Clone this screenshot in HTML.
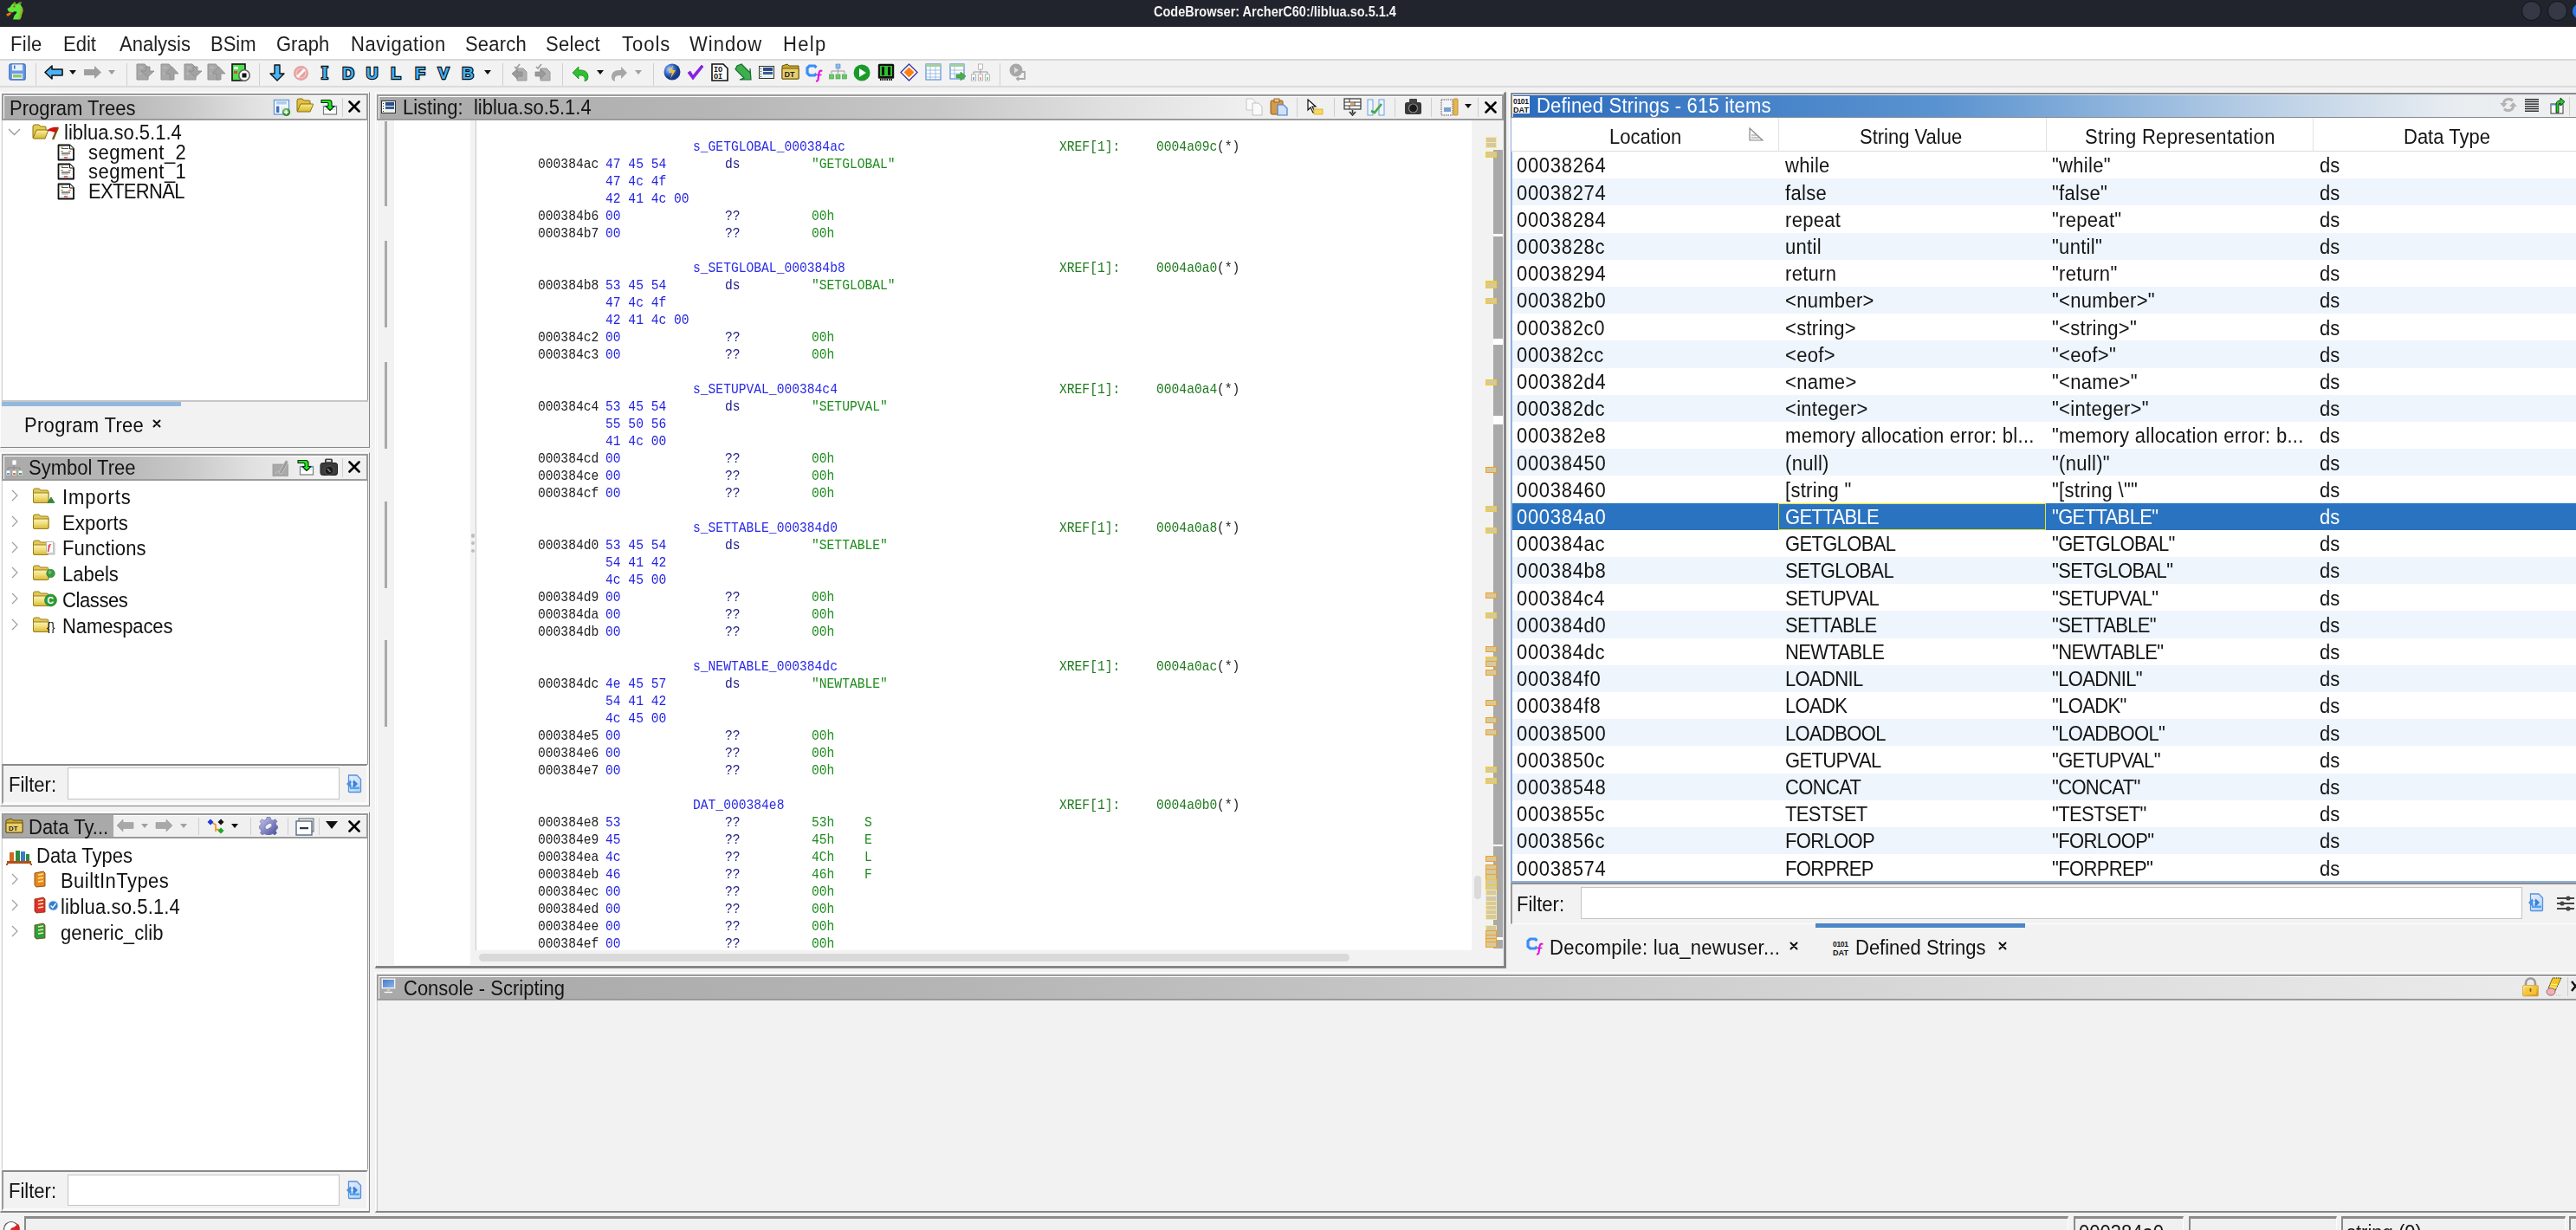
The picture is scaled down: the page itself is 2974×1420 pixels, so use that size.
<!DOCTYPE html><html><head><meta charset="utf-8"><style>
html,body{margin:0;padding:0;width:2974px;height:1420px;overflow:hidden;background:#f2f2f2;}
body{position:relative;font-family:"Liberation Sans", sans-serif;}
div{position:absolute;box-sizing:border-box;}
.t{white-space:pre;will-change:transform;}
svg{position:absolute;}
</style></head><body>
<div style="left:0px;top:0px;width:2974px;height:31px;background:#21242d;"></div>
<div class="t" style="left:1332px;top:4.68px;font-size:14.5px;line-height:18px;color:#f4f4f4;font-family:'Liberation Sans', sans-serif;transform:scaleY(1.1);transform-origin:0 14.02px;font-weight:bold;">CodeBrowser: ArcherC60:/liblua.so.5.1.4</div>
<div style="left:2910.5px;top:1px;width:23px;height:23px;border-radius:50%;background:#353945;border:1.6px solid #111318;"></div>
<div style="left:2940.5px;top:1px;width:23px;height:23px;border-radius:50%;background:#353945;border:1.6px solid #111318;"></div>
<div style="left:2970px;top:3px;width:24px;height:20px;border-radius:50%;background:#2a74e8;"></div>
<svg style="position:absolute;left:0px;top:0px;" width="30" height="26" viewBox="0 0 30 26"><path d="M14 5 L17 2 L19 5 L23 2.5 L24 6 L26 9 L26.5 13 L25 16 L24.5 20 L23 22.5 L15 22.5 L16.5 18 L19 15 L17 13 L14 14.5 L11 14 L9 12 L8.5 10 L12 8 L13 6 Z" fill="#5ee83c"/><path d="M16 2.5 L19 5 L18 6 L15 4.5 Z M22 2.5 L25 2 L24 6 L22 5 Z" fill="#8a8a10"/><path d="M24 8 L26.5 10 L26 15 L24.5 19 L23 22 L21 21 L23 15 Z" fill="#a8a818" opacity="0.75"/><path d="M18 13 L19.5 14 L17 17 L16 16 Z" fill="#1a1e20"/><path d="M7 16.5 L12 14 L13 16 L9 19 Z" fill="#f0780a"/><path d="M11 13.5 L14 14 L12 15.5 Z" fill="#c83010"/><circle cx="16.5" cy="7.5" r="1.1" fill="#c82818"/></svg>
<div style="left:0px;top:31px;width:2974px;height:37px;background:#ffffff;"></div>
<div class="t" style="left:12px;top:38.48px;font-size:22px;line-height:28px;color:#1e1e1e;font-family:'Liberation Sans', sans-serif;transform:scaleY(1.07);transform-origin:0 21.62px;letter-spacing:0.3px;">File</div>
<div class="t" style="left:73px;top:38.48px;font-size:22px;line-height:28px;color:#1e1e1e;font-family:'Liberation Sans', sans-serif;transform:scaleY(1.07);transform-origin:0 21.62px;letter-spacing:0px;">Edit</div>
<div class="t" style="left:138px;top:38.48px;font-size:22px;line-height:28px;color:#1e1e1e;font-family:'Liberation Sans', sans-serif;transform:scaleY(1.07);transform-origin:0 21.62px;letter-spacing:0px;">Analysis</div>
<div class="t" style="left:243px;top:38.48px;font-size:22px;line-height:28px;color:#1e1e1e;font-family:'Liberation Sans', sans-serif;transform:scaleY(1.07);transform-origin:0 21.62px;letter-spacing:0px;">BSim</div>
<div class="t" style="left:319px;top:38.48px;font-size:22px;line-height:28px;color:#1e1e1e;font-family:'Liberation Sans', sans-serif;transform:scaleY(1.07);transform-origin:0 21.62px;letter-spacing:0px;">Graph</div>
<div class="t" style="left:405px;top:38.48px;font-size:22px;line-height:28px;color:#1e1e1e;font-family:'Liberation Sans', sans-serif;transform:scaleY(1.07);transform-origin:0 21.62px;letter-spacing:0.6px;">Navigation</div>
<div class="t" style="left:537px;top:38.48px;font-size:22px;line-height:28px;color:#1e1e1e;font-family:'Liberation Sans', sans-serif;transform:scaleY(1.07);transform-origin:0 21.62px;letter-spacing:0.2px;">Search</div>
<div class="t" style="left:630px;top:38.48px;font-size:22px;line-height:28px;color:#1e1e1e;font-family:'Liberation Sans', sans-serif;transform:scaleY(1.07);transform-origin:0 21.62px;letter-spacing:0.3px;">Select</div>
<div class="t" style="left:718px;top:38.48px;font-size:22px;line-height:28px;color:#1e1e1e;font-family:'Liberation Sans', sans-serif;transform:scaleY(1.07);transform-origin:0 21.62px;letter-spacing:1.0px;">Tools</div>
<div class="t" style="left:796px;top:38.48px;font-size:22px;line-height:28px;color:#1e1e1e;font-family:'Liberation Sans', sans-serif;transform:scaleY(1.07);transform-origin:0 21.62px;letter-spacing:1.0px;">Window</div>
<div class="t" style="left:904px;top:38.48px;font-size:22px;line-height:28px;color:#1e1e1e;font-family:'Liberation Sans', sans-serif;transform:scaleY(1.07);transform-origin:0 21.62px;letter-spacing:1.3px;">Help</div>
<div style="left:0px;top:68px;width:2974px;height:2px;background:#d9d9d9;"></div>
<div style="left:0px;top:70px;width:2974px;height:29px;background:#f2f2f2;"></div>
<div style="left:0px;top:99px;width:2974px;height:2px;background:#dcdcdc;"></div>
<svg style="position:absolute;left:10px;top:73px;" width="20" height="20" viewBox="0 0 20 20"><rect x="0.8" y="0.8" width="18.4" height="18.4" rx="2" fill="#6b9be0" stroke="#3f6fc0" stroke-width="1.2"/><rect x="4" y="1.5" width="12" height="7" fill="#e8f0fb"/><rect x="6" y="2.5" width="1.5" height="4" fill="#3f6fc0"/><rect x="4" y="12" width="12" height="6" fill="#f4f4f4"/><rect x="5" y="13" width="10" height="3.5" fill="#8cc870"/></svg>
<div style="left:41px;top:73px;width:1px;height:26px;background:#d0d0d0;"></div>
<svg style="position:absolute;left:51px;top:75px;" width="22" height="17" viewBox="0 0 22 17"><path d="M1 8.5 L9 1 L9 5 L21 5 L21 12 L9 12 L9 16 Z" fill="#48b4f8" stroke="#111" stroke-width="1.6" stroke-linejoin="round"/></svg>
<svg style="position:absolute;left:80px;top:81px;" width="8" height="5" viewBox="0 0 8 5"><path d="M0 0 L8 0 L4 5 Z" fill="#111"/></svg>
<svg style="position:absolute;left:96px;top:75px;" width="22" height="17" viewBox="0 0 22 17"><path d="M21 8.5 L13 1 L13 5 L1 5 L1 12 L13 12 L13 16 Z" fill="#9e9e9e"/></svg>
<svg style="position:absolute;left:125px;top:81px;" width="8" height="5" viewBox="0 0 8 5"><path d="M0 0 L8 0 L4 5 Z" fill="#9a9a9a"/></svg>
<div style="left:146px;top:73px;width:1px;height:26px;background:#d0d0d0;"></div>
<svg style="position:absolute;left:156.6px;top:73px;" width="21" height="21" viewBox="0 0 21 21"><path d="M1 1 L10 1 L14 5 L14 19 L1 19 Z" fill="#a8a8a8" stroke="#929292" stroke-width="1"/><path d="M3.5 5 H8 M3.5 12 H6" stroke="#c4c4c4" stroke-width="1"/><path d="M9 8 L14 8 L14 13 L19 13 L11.5 20 L4 13 L9 13 Z" fill="#a2a2a2" stroke="#8a8a8a" stroke-width="0.8" transform="translate(2,-4)"/></svg>
<svg style="position:absolute;left:184.6px;top:73px;" width="21" height="21" viewBox="0 0 21 21"><path d="M1 1 L10 1 L14 5 L14 19 L1 19 Z" fill="#a8a8a8" stroke="#929292" stroke-width="1"/><path d="M3.5 5 H8 M3.5 12 H6" stroke="#c4c4c4" stroke-width="1"/><path d="M9 20 L14 20 L14 13 L19 13 L11.5 5 L4 13 L9 13 Z" fill="#a2a2a2" stroke="#8a8a8a" stroke-width="0.8" transform="translate(2,-1)"/></svg>
<svg style="position:absolute;left:212px;top:73px;" width="21" height="21" viewBox="0 0 21 21"><path d="M1 1 L10 1 L14 5 L14 19 L1 19 Z" fill="#a8a8a8" stroke="#929292" stroke-width="1"/><path d="M3.5 5 H8 M3.5 12 H6" stroke="#c4c4c4" stroke-width="1"/><path d="M9 8 L14 8 L14 13 L19 13 L11.5 20 L4 13 L9 13 Z" fill="#a2a2a2" stroke="#8a8a8a" stroke-width="0.8" transform="translate(2,-4)"/></svg>
<svg style="position:absolute;left:239.3px;top:73px;" width="21" height="21" viewBox="0 0 21 21"><path d="M1 1 L10 1 L14 5 L14 19 L1 19 Z" fill="#a8a8a8" stroke="#929292" stroke-width="1"/><path d="M3.5 5 H8 M3.5 12 H6" stroke="#c4c4c4" stroke-width="1"/><path d="M9 20 L14 20 L14 13 L19 13 L11.5 5 L4 13 L9 13 Z" fill="#a2a2a2" stroke="#8a8a8a" stroke-width="0.8" transform="translate(2,-1)"/></svg>
<svg style="position:absolute;left:266.5px;top:73px;" width="22" height="21" viewBox="0 0 22 21"><rect x="1" y="1" width="15" height="19" fill="#4ee04e" stroke="#111" stroke-width="1.6"/><rect x="3" y="4" width="5" height="3" fill="#fff"/><rect x="3" y="9" width="4" height="3" fill="#d44"/><circle cx="15" cy="14" r="6.2" fill="#fff" stroke="#666" stroke-width="1.6"/><rect x="12.5" y="11.5" width="5" height="5" fill="#111"/></svg>
<div style="left:298.7px;top:73px;width:1px;height:26px;background:#d0d0d0;"></div>
<svg style="position:absolute;left:311px;top:74px;" width="18" height="20" viewBox="0 0 18 20"><path d="M6 1 L12 1 L12 11 L17 11 L9 19 L1 11 L6 11 Z" fill="#48b4f8" stroke="#111" stroke-width="1.4" stroke-linejoin="round"/></svg>
<svg style="position:absolute;left:338px;top:75px;" width="19" height="19" viewBox="0 0 19 19"><circle cx="9.5" cy="9.5" r="8.5" fill="#e8a0a0"/><path d="M5 14 L14 5" stroke="#fff" stroke-width="2.8"/><circle cx="9.5" cy="9.5" r="5.5" fill="none" stroke="#fff" stroke-width="1.2" opacity="0.5"/></svg>
<svg style="position:absolute;left:367px;top:71px;" width="16" height="24" viewBox="0 0 16 24"><text x="8.0" y="20" text-anchor="middle" font-size="20" font-weight="bold" font-family="Liberation Serif" fill="#40b0f5" stroke="#0a0a0a" stroke-width="2.4" paint-order="stroke" stroke-linejoin="miter">I</text></svg>
<svg style="position:absolute;left:392.3px;top:71px;" width="20" height="24" viewBox="0 0 20 24"><text x="10.0" y="20" text-anchor="middle" font-size="19" font-weight="bold" font-family="Liberation Sans" fill="#40b0f5" stroke="#0a0a0a" stroke-width="2.4" paint-order="stroke" stroke-linejoin="miter">D</text></svg>
<svg style="position:absolute;left:420.3px;top:71px;" width="19" height="24" viewBox="0 0 19 24"><text x="9.5" y="20" text-anchor="middle" font-size="19" font-weight="bold" font-family="Liberation Sans" fill="#40b0f5" stroke="#0a0a0a" stroke-width="2.4" paint-order="stroke" stroke-linejoin="miter">U</text></svg>
<svg style="position:absolute;left:449px;top:71px;" width="16" height="24" viewBox="0 0 16 24"><text x="8.0" y="20" text-anchor="middle" font-size="19" font-weight="bold" font-family="Liberation Sans" fill="#40b0f5" stroke="#0a0a0a" stroke-width="2.4" paint-order="stroke" stroke-linejoin="miter">L</text></svg>
<svg style="position:absolute;left:477px;top:71px;" width="16" height="24" viewBox="0 0 16 24"><text x="8.0" y="20" text-anchor="middle" font-size="19" font-weight="bold" font-family="Liberation Sans" fill="#40b0f5" stroke="#0a0a0a" stroke-width="2.4" paint-order="stroke" stroke-linejoin="miter">F</text></svg>
<svg style="position:absolute;left:502.4px;top:71px;" width="20" height="24" viewBox="0 0 20 24"><text x="10.0" y="20" text-anchor="middle" font-size="19" font-weight="bold" font-family="Liberation Sans" fill="#40b0f5" stroke="#0a0a0a" stroke-width="2.4" paint-order="stroke" stroke-linejoin="miter">V</text></svg>
<svg style="position:absolute;left:531.2px;top:71px;" width="18" height="24" viewBox="0 0 18 24"><text x="9.0" y="20" text-anchor="middle" font-size="19" font-weight="bold" font-family="Liberation Sans" fill="#40b0f5" stroke="#0a0a0a" stroke-width="2.4" paint-order="stroke" stroke-linejoin="miter">B</text></svg>
<svg style="position:absolute;left:558.5px;top:81px;" width="8" height="5" viewBox="0 0 8 5"><path d="M0 0 L8 0 L4 5 Z" fill="#111"/></svg>
<div style="left:579.5px;top:73px;width:1px;height:26px;background:#d0d0d0;"></div>
<svg style="position:absolute;left:590px;top:73px;" width="21" height="21" viewBox="0 0 21 21"><path d="M7 6 L14 6 L18 10 L18 20 L7 20 Z" fill="#b0b0b0" stroke="#9a9a9a"/><path d="M1 12 L7 7 L7 10 L13 10 L13 15 L7 15 L7 18 Z" fill="#9a9a9a" stroke="#888" stroke-width="0.8"/><path d="M4 4 L6 6 L10 1" stroke="#9a9a9a" stroke-width="1.6" fill="none"/></svg>
<svg style="position:absolute;left:617px;top:73px;" width="21" height="21" viewBox="0 0 21 21"><path d="M7 6 L14 6 L18 10 L18 20 L7 20 Z" fill="#b0b0b0" stroke="#9a9a9a"/><path d="M13 12 L7 7 L7 10 L1 10 L1 15 L7 15 L7 18 Z" fill="#9a9a9a" stroke="#888" stroke-width="0.8"/><path d="M2 4 L4 6 L8 1" stroke="#9a9a9a" stroke-width="1.6" fill="none"/></svg>
<div style="left:649px;top:73px;width:1px;height:26px;background:#d0d0d0;"></div>
<svg style="position:absolute;left:659px;top:76px;" width="22" height="18" viewBox="0 0 22 18"><path d="M2 8 L9 1 L9 5 Q20 4 20 13 Q20 17 16 18 Q18 10 9 11 L9 15 Z" fill="#2ec02e" stroke="#1a8a1a" stroke-width="0.8"/></svg>
<svg style="position:absolute;left:688.5px;top:81px;" width="8" height="5" viewBox="0 0 8 5"><path d="M0 0 L8 0 L4 5 Z" fill="#111"/></svg>
<svg style="position:absolute;left:704px;top:76px;" width="22" height="18" viewBox="0 0 22 18"><path d="M20 8 L13 1 L13 5 Q2 4 2 13 Q2 17 6 18 Q4 10 13 11 L13 15 Z" fill="#a6a6a6"/></svg>
<svg style="position:absolute;left:733px;top:81px;" width="8" height="5" viewBox="0 0 8 5"><path d="M0 0 L8 0 L4 5 Z" fill="#a0a0a0"/></svg>
<div style="left:753.8px;top:73px;width:1px;height:26px;background:#d0d0d0;"></div>
<svg style="position:absolute;left:765.5px;top:73px;" width="20" height="20" viewBox="0 0 20 20"><defs><radialGradient id="gl" cx="35%" cy="35%"><stop offset="0" stop-color="#bcd8ff"/><stop offset="0.6" stop-color="#3a6fd0"/><stop offset="1" stop-color="#1a3a8a"/></radialGradient></defs><circle cx="10" cy="10" r="9.5" fill="url(#gl)"/><path d="M11 2 L6 11 L10 11 L8 18 L14 8 L10 8 Z" fill="#f5c030"/></svg>
<svg style="position:absolute;left:792.5px;top:74px;" width="20" height="19" viewBox="0 0 20 19"><path d="M1 10 L4 8 L7 13 L17 1 L19 3 L7 18 Z" fill="#8a1ee8" stroke="#6a10c0" stroke-width="0.6"/></svg>
<svg style="position:absolute;left:820.5px;top:73px;" width="20" height="21" viewBox="0 0 20 21"><path d="M1 1 L14 1 L19 6 L19 20 L1 20 Z" fill="#fff" stroke="#111" stroke-width="1.6"/><text x="3" y="9.5" font-size="8.5" font-weight="bold" font-family="Liberation Mono" fill="#111">IO</text><text x="3" y="17.5" font-size="8.5" font-weight="bold" font-family="Liberation Mono" fill="#111">OI</text></svg>
<svg style="position:absolute;left:847.5px;top:73px;" width="20" height="21" viewBox="0 0 20 21"><path d="M3 3 L8 1 L18 11 L18 6 L19 19 L6 19 L11 17 L1 7 Z" fill="#3cb050" stroke="#1a6a2a" stroke-width="1.2"/></svg>
<svg style="position:absolute;left:875.5px;top:76px;" width="18" height="15" viewBox="0 0 18 15"><rect x="0.5" y="0.5" width="17" height="14" fill="#e8f4ea" stroke="#333" stroke-width="1"/><rect x="5" y="2" width="11" height="4" fill="#2a4a8a"/><rect x="5" y="7" width="11" height="3" fill="#3a5a9a"/><path d="M2.5 3 V4 M2.5 6 V7 M2.5 9 V10 M2.5 12 V13" stroke="#222" stroke-width="1"/></svg>
<svg style="position:absolute;left:902px;top:73px;" width="21" height="19" viewBox="0 0 21 19"><path d="M1 3 L7 1 L9 3 L20 3 L20 18 L1 18 Z" fill="#c9a830" stroke="#6a5208" stroke-width="1"/><path d="M1 6 L20 6 L20 18 L1 18 Z" fill="#e9cf6a" stroke="#6a5208" stroke-width="1"/><text x="3.5" y="16" font-size="9" font-weight="bold" fill="#222" font-family="Liberation Sans">DT</text></svg>
<svg style="position:absolute;left:930px;top:73.5px;" width="22.0" height="21.0" viewBox="0 0 22.0 21.0"><g transform="scale(1.0)"><path d="M12.5 4 L10.5 2 L4.5 2 L2 4.5 L2 10.5 L4.5 13 L10.5 13 L12.5 11" fill="none" stroke="#3a8ef8" stroke-width="3.2" stroke-linejoin="miter"/><path d="M19 8.5 Q18 7 16.5 8 Q15.5 9 15.3 12 L14.5 18 Q14 20 12 19.5" fill="none" stroke="#e018d8" stroke-width="2.2"/><path d="M13 12.5 L18.5 12.5" stroke="#e018d8" stroke-width="1.6"/></g></svg>
<svg style="position:absolute;left:957px;top:73px;" width="21" height="21" viewBox="0 0 21 21"><rect x="8" y="1" width="5" height="5" fill="#8ab8f0" stroke="#5a88c0" stroke-width="0.6"/><path d="M10.5 6 V9 M3 9 H18 M3 9 V12 M10.5 9 V12 M18 9 V12" stroke="#999" stroke-width="1"/><rect x="0.5" y="13" width="5" height="5" fill="#6cc86c" stroke="#3a9a3a" stroke-width="0.6"/><rect x="8" y="13" width="5" height="5" fill="#6cc86c" stroke="#3a9a3a" stroke-width="0.6"/><rect x="15.5" y="13" width="5" height="5" fill="#6cc86c" stroke="#3a9a3a" stroke-width="0.6"/></svg>
<svg style="position:absolute;left:985px;top:74px;" width="20" height="20" viewBox="0 0 20 20"><circle cx="10" cy="10" r="9.5" fill="#1a9a2a"/><path d="M7 5 L15 10 L7 15 Z" fill="#fff"/></svg>
<svg style="position:absolute;left:1013px;top:73px;" width="20" height="21" viewBox="0 0 20 21"><rect x="0.8" y="0.8" width="18.4" height="17" rx="1.5" fill="#111"/><rect x="3" y="3" width="14" height="12" fill="#2ec02e"/><rect x="5" y="4" width="3" height="10" fill="#111"/><rect x="12" y="4" width="3" height="10" fill="#111"/><path d="M3 19 H17" stroke="#111" stroke-width="2" stroke-dasharray="1.5 1"/></svg>
<svg style="position:absolute;left:1039px;top:73px;" width="21" height="21" viewBox="0 0 21 21"><path d="M10.5 1 L20 10.5 L10.5 20 L1 10.5 Z" fill="#fff" stroke="#3a3aa8" stroke-width="1.4"/><path d="M10.5 4.5 L16.5 10.5 L10.5 16.5 L4.5 10.5 Z" fill="#ff8010"/></svg>
<svg style="position:absolute;left:1068px;top:73px;" width="19" height="20" viewBox="0 0 19 20"><rect x="1" y="1" width="17" height="18" fill="#fff" stroke="#5a90d8" stroke-width="1.2"/><rect x="1" y="1" width="17" height="3" fill="#a0d0a0"/><path d="M1 8 H18 M1 12 H18 M1 16 H18 M6 4 V19 M12 4 V19" stroke="#8ab0e0" stroke-width="0.8"/></svg>
<svg style="position:absolute;left:1096px;top:73px;" width="20" height="21" viewBox="0 0 20 21"><rect x="1" y="1" width="16" height="17" fill="#fff" stroke="#5a90d8" stroke-width="1.2"/><rect x="1" y="1" width="16" height="3" fill="#a0d0a0"/><path d="M1 8 H17 M1 12 H17 M6 4 V18" stroke="#8ab0e0" stroke-width="0.8"/><path d="M8 13 L13 13 L13 10 L19 15 L13 20 L13 17 L8 17 Z" fill="#48b048" stroke="#2a8a2a" stroke-width="0.6"/></svg>
<svg style="position:absolute;left:1121px;top:73px;" width="22" height="21" viewBox="0 0 22 21"><rect x="8.5" y="1" width="5" height="6" fill="#fff" stroke="#aaa" stroke-width="0.8"/><path d="M11 7 V10 M3 10 H19 M3 10 V13 M11 10 V13 M19 10 V13" stroke="#999" stroke-width="1"/><rect x="0.5" y="13" width="5" height="7" fill="#fff" stroke="#aaa" stroke-width="0.8"/><rect x="8.5" y="13" width="5" height="7" fill="#fff" stroke="#aaa" stroke-width="0.8"/><rect x="16.5" y="13" width="5" height="7" fill="#fff" stroke="#aaa" stroke-width="0.8"/><rect x="2" y="16" width="2" height="3" fill="#8ac"/><rect x="10" y="16" width="2" height="3" fill="#e98"/><rect x="18" y="16" width="2" height="3" fill="#8c8"/></svg>
<div style="left:1154.4px;top:73px;width:1px;height:26px;background:#d0d0d0;"></div>
<svg style="position:absolute;left:1165px;top:73px;" width="20" height="21" viewBox="0 0 20 21"><circle cx="8" cy="8" r="7.5" fill="#a8a8a8"/><path d="M6 4.5 L11 8 L6 11.5 Z" fill="#ddd"/><path d="M14 10 L18 10 L18 18 L9 18 M11 16 L9 18 L11 20" stroke="#a8a8a8" stroke-width="1.8" fill="none"/></svg>
<div style="left:0px;top:106px;width:427px;height:411px;border-right:1.5px solid #858585;border-bottom:1.5px solid #858585;border-top:1px solid #fdfdfd;border-left:1px solid #fdfdfd;"></div>
<div style="left:2px;top:108px;width:423px;height:31px;border:2px solid #9b9b9b;background:linear-gradient(90deg,#a9a9a9 0%,#b6b6b6 30%,#c8c8c8 50%,#e0e0e0 68%,#f0f0f0 85%);box-shadow:inset 1px 1px 0 #ffffff;"></div>
<div class="t" style="left:11px;top:111.78px;font-size:22px;line-height:28px;color:#141414;font-family:'Liberation Sans', sans-serif;transform:scaleY(1.07);transform-origin:0 21.62px;">Program Trees</div>
<svg style="position:absolute;left:315px;top:114px;" width="21" height="21" viewBox="0 0 21 21"><defs><radialGradient id="gc1" cx="40%" cy="35%"><stop offset="0" stop-color="#9be08a"/><stop offset="1" stop-color="#2f8a2a"/></radialGradient></defs><rect x="1.5" y="1.5" width="17" height="16.5" fill="#fdfdfe" stroke="#6f9ad8" stroke-width="1.4"/><rect x="4" y="3" width="12" height="3.6" fill="#a9cdf0"/><rect x="4" y="8.5" width="3.4" height="7.5" rx="0.6" fill="#3d6fc0"/><rect x="9" y="8.5" width="7" height="7.5" fill="#e6edf7"/><circle cx="15.5" cy="15.5" r="4.6" fill="url(#gc1)"/><path d="M15.5 13 V18 M13 15.5 H18" stroke="#fff" stroke-width="1.6"/></svg>
<svg style="position:absolute;left:341px;top:112px;" width="22" height="20" viewBox="0 0 22 20"><defs><linearGradient id="fo1" x1="0" y1="0" x2="0" y2="1"><stop offset="0" stop-color="#f8e890"/><stop offset="1" stop-color="#d8b828"/></linearGradient></defs><path d="M2 4 Q2 2 4 2 L8 2 L10 4 L16 4 Q17 4 17 5 L17 8 L2 16 Z" fill="#e0c040" stroke="#8a7010" stroke-width="1"/><path d="M6 8 L20 8 Q21 8 20.5 9 L17 17 L2 17 Z" fill="url(#fo1)" stroke="#8a7010" stroke-width="1"/></svg>
<svg style="position:absolute;left:369px;top:113px;" width="21" height="21" viewBox="0 0 21 21"><rect x="4.5" y="9.5" width="15" height="9.5" fill="#fff" stroke="#7a7a7a" stroke-width="1.2"/><rect x="4.5" y="9" width="15" height="1.8" fill="#5aa6f0"/><path d="M6 13.5 H10.5 M13.5 13.5 H18" stroke="#d8d8d8" stroke-width="1.2"/><path d="M2 2.5 L11 2.5 Q14 2.5 14 5.5 L14 9.5 L17 9.5 L12 14.5 L7 9.5 L10 9.5 L10 6.5 Q10 5.5 9 5.5 L2 5.5 Z" fill="#1ee81e" stroke="#062806" stroke-width="1.1" stroke-linejoin="round"/></svg>
<div style="left:395px;top:113px;width:1px;height:22px;background:#cfcfcf;"></div>
<svg style="position:absolute;left:402px;top:116px;" width="14" height="14" viewBox="0 0 14 14"><path d="M1.5 1.5 L12.5 12.5 M12.5 1.5 L1.5 12.5" stroke="#000" stroke-width="2.6" stroke-linecap="round"/></svg>
<div style="left:2px;top:139px;width:423px;height:324px;background:#fff;border-left:1.5px solid #d2d2d2;border-right:1.5px solid #9a9a9a;"></div>
<svg style="position:absolute;left:9px;top:148px;" width="15" height="9" viewBox="0 0 15 9"><path d="M1 1 L7.5 7.5 L14 1" fill="none" stroke="#9a9a9a" stroke-width="1.4"/></svg>
<svg style="position:absolute;left:37px;top:142px;" width="31" height="20" viewBox="0 0 31 20"><defs><linearGradient id="rf1" x1="0" y1="0" x2="0" y2="1"><stop offset="0" stop-color="#fbf0a0"/><stop offset="1" stop-color="#d8b830"/></linearGradient></defs><path d="M1 4 Q1 2 3 2 L8 2 L10 4 L15 4 Q16 4 16 5 L16 8 L1 17 Z" fill="#e6cc50" stroke="#8a7010" stroke-width="1"/><path d="M5 8 L18 8 Q19 8 18.5 9 L15 18 L2 18 Q1 18 1.3 17 Z" fill="url(#rf1)" stroke="#8a7010" stroke-width="1"/><path d="M24 19 L30 5" stroke="#7a5a10" stroke-width="2.4"/><path d="M17 9 Q22 4 30 5 L27 11 Q22 9 17 9 Z" fill="#d80e0e"/></svg>
<div class="t" style="left:74px;top:139.88px;font-size:22px;line-height:28px;color:#111;font-family:'Liberation Sans', sans-serif;transform:scaleY(1.07);transform-origin:0 21.62px;">liblua.so.5.1.4</div>
<svg style="position:absolute;left:66px;top:165.8px;" width="21" height="20" viewBox="0 0 21 20"><path d="M1.5 1.5 L14.5 1.5 L19 6 L19 18.5 L1.5 18.5 Z" fill="#fff" stroke="#111" stroke-width="1.8" stroke-linejoin="round"/><path d="M14.5 1.5 L14.5 6 L19 6" fill="#fff" stroke="#111" stroke-width="1"/><rect x="4" y="3.5" width="3" height="1.2" fill="#9aa060"/><rect x="5" y="5" width="8" height="1" fill="#555"/><rect x="4" y="8" width="3" height="1.2" fill="#9aa060"/><rect x="13" y="8" width="3" height="1.2" fill="#d8802a"/><rect x="5" y="10" width="10" height="2.2" fill="#8a8a8a"/><rect x="5" y="12.5" width="8" height="1" fill="#aaa"/><rect x="8" y="15" width="4" height="1.5" fill="#d01010"/><rect x="5" y="15.5" width="11" height="0.6" fill="#bbb"/></svg>
<div class="t" style="left:102px;top:162.68px;font-size:22px;line-height:28px;color:#111;font-family:'Liberation Sans', sans-serif;transform:scaleY(1.07);transform-origin:0 21.62px;letter-spacing:0.5px;">segment_2</div>
<svg style="position:absolute;left:66px;top:187.8px;" width="21" height="20" viewBox="0 0 21 20"><path d="M1.5 1.5 L14.5 1.5 L19 6 L19 18.5 L1.5 18.5 Z" fill="#fff" stroke="#111" stroke-width="1.8" stroke-linejoin="round"/><path d="M14.5 1.5 L14.5 6 L19 6" fill="#fff" stroke="#111" stroke-width="1"/><rect x="4" y="3.5" width="3" height="1.2" fill="#9aa060"/><rect x="5" y="5" width="8" height="1" fill="#555"/><rect x="4" y="8" width="3" height="1.2" fill="#9aa060"/><rect x="13" y="8" width="3" height="1.2" fill="#d8802a"/><rect x="5" y="10" width="10" height="2.2" fill="#8a8a8a"/><rect x="5" y="12.5" width="8" height="1" fill="#aaa"/><rect x="8" y="15" width="4" height="1.5" fill="#d01010"/><rect x="5" y="15.5" width="11" height="0.6" fill="#bbb"/></svg>
<div class="t" style="left:102px;top:184.68px;font-size:22px;line-height:28px;color:#111;font-family:'Liberation Sans', sans-serif;transform:scaleY(1.07);transform-origin:0 21.62px;letter-spacing:0.5px;">segment_1</div>
<svg style="position:absolute;left:66px;top:211.1px;" width="21" height="20" viewBox="0 0 21 20"><path d="M1.5 1.5 L14.5 1.5 L19 6 L19 18.5 L1.5 18.5 Z" fill="#fff" stroke="#111" stroke-width="1.8" stroke-linejoin="round"/><path d="M14.5 1.5 L14.5 6 L19 6" fill="#fff" stroke="#111" stroke-width="1"/><rect x="4" y="3.5" width="3" height="1.2" fill="#9aa060"/><rect x="5" y="5" width="8" height="1" fill="#555"/><rect x="4" y="8" width="3" height="1.2" fill="#9aa060"/><rect x="13" y="8" width="3" height="1.2" fill="#d8802a"/><rect x="5" y="10" width="10" height="2.2" fill="#8a8a8a"/><rect x="5" y="12.5" width="8" height="1" fill="#aaa"/><rect x="8" y="15" width="4" height="1.5" fill="#d01010"/><rect x="5" y="15.5" width="11" height="0.6" fill="#bbb"/></svg>
<div class="t" style="left:102px;top:207.98px;font-size:22px;line-height:28px;color:#111;font-family:'Liberation Sans', sans-serif;transform:scaleY(1.07);transform-origin:0 21.62px;letter-spacing:-0.65px;">EXTERNAL</div>
<div style="left:2px;top:462px;width:423px;height:2px;background:#c6c6c6;"></div>
<div style="left:2px;top:463.5px;width:207px;height:5px;background:#93b8de;"></div>
<div class="t" style="left:28px;top:478.38px;font-size:22px;line-height:28px;color:#111;font-family:'Liberation Sans', sans-serif;transform:scaleY(1.07);transform-origin:0 21.62px;letter-spacing:0.3px;">Program Tree</div>
<svg style="position:absolute;left:176px;top:484px;" width="10" height="10" viewBox="0 0 10 10"><path d="M1.5 1.5 L8.5 8.5 M8.5 1.5 L1.5 8.5" stroke="#111" stroke-width="2.0" stroke-linecap="round"/></svg>
<div style="left:0px;top:522px;width:427px;height:409px;border-right:1.5px solid #858585;border-bottom:1.5px solid #858585;border-top:1px solid #fdfdfd;border-left:1px solid #fdfdfd;"></div>
<div style="left:2px;top:524px;width:423px;height:31px;border:2px solid #9b9b9b;background:linear-gradient(90deg,#a9a9a9 0%,#b6b6b6 30%,#c8c8c8 50%,#e0e0e0 68%,#f0f0f0 85%);box-shadow:inset 1px 1px 0 #ffffff;"></div>
<svg style="position:absolute;left:6px;top:530px;" width="20" height="20" viewBox="0 0 20 20"><rect x="8" y="1" width="5" height="6" fill="#fff" stroke="#aaa" stroke-width="0.8"/><path d="M10 7 V10 M3 10 H17 M3 10 V13 M10 10 V13 M17 10 V13" stroke="#888" stroke-width="1"/><rect x="1" y="13" width="5" height="6" fill="#fff" stroke="#999" stroke-width="0.8"/><rect x="8" y="13" width="5" height="6" fill="#fff" stroke="#999" stroke-width="0.8"/><rect x="15" y="13" width="5" height="6" fill="#fff" stroke="#999" stroke-width="0.8"/><rect x="2" y="16" width="3" height="2" fill="#5a9ae0"/><rect x="9" y="16" width="3" height="2" fill="#e07a3a"/><rect x="16" y="16" width="3" height="2" fill="#3aa648"/></svg>
<div class="t" style="left:33px;top:526.88px;font-size:22px;line-height:28px;color:#141414;font-family:'Liberation Sans', sans-serif;transform:scaleY(1.07);transform-origin:0 21.62px;">Symbol Tree</div>
<svg style="position:absolute;left:314px;top:529px;" width="21" height="22" viewBox="0 0 21 22"><rect x="1" y="7" width="17.5" height="13.5" fill="#a9a9a9" stroke="#999" stroke-width="0.8"/><path d="M8 17 L15 4 Q16 2 17.5 3 Q19 4 18 6 L11 18 Z" fill="#9a9a9a" stroke="#c8c8c8" stroke-width="0.8"/><path d="M4 18 Q6 14 9 15" stroke="#c8c8c8" stroke-width="0.8" fill="none"/></svg>
<svg style="position:absolute;left:342px;top:529px;" width="21" height="21" viewBox="0 0 21 21"><rect x="4.5" y="9.5" width="15" height="9.5" fill="#fff" stroke="#7a7a7a" stroke-width="1.2"/><rect x="4.5" y="9" width="15" height="1.8" fill="#5aa6f0"/><path d="M6 13.5 H10.5 M13.5 13.5 H18" stroke="#d8d8d8" stroke-width="1.2"/><path d="M2 2.5 L11 2.5 Q14 2.5 14 5.5 L14 9.5 L17 9.5 L12 14.5 L7 9.5 L10 9.5 L10 6.5 Q10 5.5 9 5.5 L2 5.5 Z" fill="#1ee81e" stroke="#062806" stroke-width="1.1" stroke-linejoin="round"/></svg>
<svg style="position:absolute;left:369px;top:529px;" width="22" height="21" viewBox="0 0 22 21"><rect x="1" y="5.5" width="19.5" height="14" rx="2.5" fill="#3c3c3c" stroke="#1a1a1a" stroke-width="1"/><rect x="6.5" y="1" width="8" height="5" rx="1" fill="#555" stroke="#222" stroke-width="0.8"/><rect x="8" y="2" width="5" height="2" fill="#ddd"/><circle cx="11" cy="14" r="5" fill="#1a1a1a" stroke="#5a5a5a" stroke-width="1"/><path d="M9 12 L12.5 16" stroke="#888" stroke-width="1.4"/></svg>
<div style="left:395px;top:529px;width:1px;height:22px;background:#cfcfcf;"></div>
<svg style="position:absolute;left:402px;top:532px;" width="14" height="14" viewBox="0 0 14 14"><path d="M1.5 1.5 L12.5 12.5 M12.5 1.5 L1.5 12.5" stroke="#000" stroke-width="2.6" stroke-linecap="round"/></svg>
<div style="left:2px;top:555px;width:423px;height:327px;background:#fff;border-left:1.5px solid #d2d2d2;border-right:1.5px solid #9a9a9a;"></div>
<svg style="position:absolute;left:12px;top:565px;" width="10" height="14" viewBox="0 0 10 14"><path d="M2 1 L8 7 L2 13" fill="none" stroke="#a0a0a0" stroke-width="1.2"/></svg>
<svg style="position:absolute;left:37px;top:563px;" width="30" height="19" viewBox="0 0 30 19"><defs><linearGradient id="fg1" x1="0" y1="0" x2="0" y2="1"><stop offset="0" stop-color="#fbf3b8"/><stop offset="0.5" stop-color="#f0dc78"/><stop offset="1" stop-color="#d8b838"/></linearGradient></defs><path d="M1.5 3 Q1.5 1 3.5 1 L8 1 L10 3 L17 3 Q19 3 19 5 L19 16 Q19 17.5 17.5 17.5 L3 17.5 Q1.5 17.5 1.5 16 Z" fill="#e2c858" stroke="#9a8018" stroke-width="1"/><path d="M1.5 6 L19 6 L19 16 Q19 17.5 17.5 17.5 L3 17.5 Q1.5 17.5 1.5 16 Z" fill="url(#fg1)" stroke="#9a8018" stroke-width="1"/><path d="M18 17.5 L22 11 L26 17.5 Z" fill="#2e8a3c" stroke="#1e6a2a" stroke-width="0.6"/></svg>
<div class="t" style="left:72px;top:560.88px;font-size:22px;line-height:28px;color:#111;font-family:'Liberation Sans', sans-serif;transform:scaleY(1.07);transform-origin:0 21.62px;letter-spacing:0.9px;">Imports</div>
<svg style="position:absolute;left:12px;top:594.7px;" width="10" height="14" viewBox="0 0 10 14"><path d="M2 1 L8 7 L2 13" fill="none" stroke="#a0a0a0" stroke-width="1.2"/></svg>
<svg style="position:absolute;left:37px;top:592.7px;" width="30" height="19" viewBox="0 0 30 19"><defs><linearGradient id="fg2" x1="0" y1="0" x2="0" y2="1"><stop offset="0" stop-color="#fbf3b8"/><stop offset="0.5" stop-color="#f0dc78"/><stop offset="1" stop-color="#d8b838"/></linearGradient></defs><path d="M1.5 3 Q1.5 1 3.5 1 L8 1 L10 3 L17 3 Q19 3 19 5 L19 16 Q19 17.5 17.5 17.5 L3 17.5 Q1.5 17.5 1.5 16 Z" fill="#e2c858" stroke="#9a8018" stroke-width="1"/><path d="M1.5 6 L19 6 L19 16 Q19 17.5 17.5 17.5 L3 17.5 Q1.5 17.5 1.5 16 Z" fill="url(#fg2)" stroke="#9a8018" stroke-width="1"/></svg>
<div class="t" style="left:72px;top:590.58px;font-size:22px;line-height:28px;color:#111;font-family:'Liberation Sans', sans-serif;transform:scaleY(1.07);transform-origin:0 21.62px;letter-spacing:0.2px;">Exports</div>
<svg style="position:absolute;left:12px;top:624.5px;" width="10" height="14" viewBox="0 0 10 14"><path d="M2 1 L8 7 L2 13" fill="none" stroke="#a0a0a0" stroke-width="1.2"/></svg>
<svg style="position:absolute;left:37px;top:622.5px;" width="30" height="19" viewBox="0 0 30 19"><defs><linearGradient id="fg3" x1="0" y1="0" x2="0" y2="1"><stop offset="0" stop-color="#fbf3b8"/><stop offset="0.5" stop-color="#f0dc78"/><stop offset="1" stop-color="#d8b838"/></linearGradient></defs><path d="M1.5 3 Q1.5 1 3.5 1 L8 1 L10 3 L17 3 Q19 3 19 5 L19 16 Q19 17.5 17.5 17.5 L3 17.5 Q1.5 17.5 1.5 16 Z" fill="#e2c858" stroke="#9a8018" stroke-width="1"/><path d="M1.5 6 L19 6 L19 16 Q19 17.5 17.5 17.5 L3 17.5 Q1.5 17.5 1.5 16 Z" fill="url(#fg3)" stroke="#9a8018" stroke-width="1"/><rect x="18" y="4" width="8" height="13" fill="#f4f4f4" stroke="#a0a0a0" stroke-width="0.8"/><rect x="16.5" y="2.5" width="8" height="13" fill="#fff" stroke="#b0b0b0" stroke-width="0.8"/><text x="18" y="12" font-size="10" fill="#e01010" font-style="italic" font-weight="bold" font-family="Liberation Serif">f</text></svg>
<div class="t" style="left:72px;top:620.38px;font-size:22px;line-height:28px;color:#111;font-family:'Liberation Sans', sans-serif;transform:scaleY(1.07);transform-origin:0 21.62px;letter-spacing:0.15px;">Functions</div>
<svg style="position:absolute;left:12px;top:654.3px;" width="10" height="14" viewBox="0 0 10 14"><path d="M2 1 L8 7 L2 13" fill="none" stroke="#a0a0a0" stroke-width="1.2"/></svg>
<svg style="position:absolute;left:37px;top:652.3px;" width="30" height="19" viewBox="0 0 30 19"><defs><linearGradient id="fg4" x1="0" y1="0" x2="0" y2="1"><stop offset="0" stop-color="#fbf3b8"/><stop offset="0.5" stop-color="#f0dc78"/><stop offset="1" stop-color="#d8b838"/></linearGradient></defs><path d="M1.5 3 Q1.5 1 3.5 1 L8 1 L10 3 L17 3 Q19 3 19 5 L19 16 Q19 17.5 17.5 17.5 L3 17.5 Q1.5 17.5 1.5 16 Z" fill="#e2c858" stroke="#9a8018" stroke-width="1"/><path d="M1.5 6 L19 6 L19 16 Q19 17.5 17.5 17.5 L3 17.5 Q1.5 17.5 1.5 16 Z" fill="url(#fg4)" stroke="#9a8018" stroke-width="1"/><circle cx="21.5" cy="10" r="4.8" fill="#3a9a40" stroke="#2a7a30" stroke-width="0.6"/><circle cx="20.5" cy="8.8" r="2" fill="#7ad07a" opacity="0.7"/></svg>
<div class="t" style="left:72px;top:650.18px;font-size:22px;line-height:28px;color:#111;font-family:'Liberation Sans', sans-serif;transform:scaleY(1.07);transform-origin:0 21.62px;letter-spacing:0px;">Labels</div>
<svg style="position:absolute;left:12px;top:684.3px;" width="10" height="14" viewBox="0 0 10 14"><path d="M2 1 L8 7 L2 13" fill="none" stroke="#a0a0a0" stroke-width="1.2"/></svg>
<svg style="position:absolute;left:37px;top:682.3px;" width="30" height="19" viewBox="0 0 30 19"><defs><linearGradient id="fg5" x1="0" y1="0" x2="0" y2="1"><stop offset="0" stop-color="#fbf3b8"/><stop offset="0.5" stop-color="#f0dc78"/><stop offset="1" stop-color="#d8b838"/></linearGradient></defs><path d="M1.5 3 Q1.5 1 3.5 1 L8 1 L10 3 L17 3 Q19 3 19 5 L19 16 Q19 17.5 17.5 17.5 L3 17.5 Q1.5 17.5 1.5 16 Z" fill="#e2c858" stroke="#9a8018" stroke-width="1"/><path d="M1.5 6 L19 6 L19 16 Q19 17.5 17.5 17.5 L3 17.5 Q1.5 17.5 1.5 16 Z" fill="url(#fg5)" stroke="#9a8018" stroke-width="1"/><circle cx="21.5" cy="11" r="7" fill="#2e9a38" stroke="#1e7a28" stroke-width="0.6"/><text x="17.6" y="15" font-size="10.5" fill="#fff" font-weight="bold" font-family="Liberation Sans">C</text></svg>
<div class="t" style="left:72px;top:680.18px;font-size:22px;line-height:28px;color:#111;font-family:'Liberation Sans', sans-serif;transform:scaleY(1.07);transform-origin:0 21.62px;letter-spacing:-0.4px;">Classes</div>
<svg style="position:absolute;left:12px;top:714px;" width="10" height="14" viewBox="0 0 10 14"><path d="M2 1 L8 7 L2 13" fill="none" stroke="#a0a0a0" stroke-width="1.2"/></svg>
<svg style="position:absolute;left:37px;top:712px;" width="30" height="19" viewBox="0 0 30 19"><defs><linearGradient id="fg6" x1="0" y1="0" x2="0" y2="1"><stop offset="0" stop-color="#fbf3b8"/><stop offset="0.5" stop-color="#f0dc78"/><stop offset="1" stop-color="#d8b838"/></linearGradient></defs><path d="M1.5 3 Q1.5 1 3.5 1 L8 1 L10 3 L17 3 Q19 3 19 5 L19 16 Q19 17.5 17.5 17.5 L3 17.5 Q1.5 17.5 1.5 16 Z" fill="#e2c858" stroke="#9a8018" stroke-width="1"/><path d="M1.5 6 L19 6 L19 16 Q19 17.5 17.5 17.5 L3 17.5 Q1.5 17.5 1.5 16 Z" fill="url(#fg6)" stroke="#9a8018" stroke-width="1"/><text x="17" y="16.5" font-size="14" fill="#111" font-family="Liberation Sans">{}</text></svg>
<div class="t" style="left:72px;top:709.88px;font-size:22px;line-height:28px;color:#111;font-family:'Liberation Sans', sans-serif;transform:scaleY(1.07);transform-origin:0 21.62px;letter-spacing:-0.1px;">Namespaces</div>
<div style="left:2px;top:881.5px;width:423px;height:47.5px;border-top:2px solid #8a8a8a;border-left:2px solid #9a9a9a;border-bottom:3px solid #fafafa;border-right:2px solid #fafafa;background:#f2f2f2;"></div>
<div class="t" style="left:10px;top:892.58px;font-size:22px;line-height:28px;color:#111;font-family:'Liberation Sans', sans-serif;transform:scaleY(1.07);transform-origin:0 21.62px;">Filter:</div>
<div style="left:77.5px;top:886px;width:314px;height:37px;background:#fff;border:1px solid #c4c4c4;"></div>
<svg style="position:absolute;left:398px;top:894px;" width="22" height="22" viewBox="0 0 22 22"><defs><linearGradient id="fic" x1="0" y1="0" x2="1" y2="1"><stop offset="0" stop-color="#e4efff"/><stop offset="1" stop-color="#b8d4f4"/></linearGradient></defs><path d="M4.5 1 L14 1 L18.5 5.5 L18.5 19.5 Q18.5 20.5 17.5 20.5 L5.5 20.5 Q4.5 20.5 4.5 19.5 Z" fill="url(#fic)" stroke="#5a8ede" stroke-width="1.3"/><rect x="6" y="14.5" width="11" height="2.6" fill="#4aa8f0"/><path d="M6.5 6.5 L2 11 L6.5 15.5 L9 11 Z" fill="#4a90e2"/><path d="M10.5 6.5 L15 11 L10.5 15.5 L8 11 Z" fill="#3a80d8"/><path d="M8.5 8 L10 11 L8.5 14 L7 11 Z" fill="#e8f0ff"/></svg>
<div style="left:0px;top:937px;width:427px;height:463px;border-right:1.5px solid #858585;border-bottom:2.5px solid #858585;border-top:1px solid #fdfdfd;border-left:1px solid #fdfdfd;"></div>
<div style="left:2px;top:939px;width:423px;height:29px;border:2px solid #9b9b9b;background:#f0f0f0;box-shadow:inset 1px 1px 0 #fff;"></div>
<div style="left:4px;top:941px;width:127px;height:25px;background:#a9a9a9;"></div>
<svg style="position:absolute;left:6px;top:944px;" width="22" height="19" viewBox="0 0 22 19"><path d="M1 3 L7 1 L9 3 L20 3 L20 17 L1 17 Z" fill="#c9a830" stroke="#6a5208" stroke-width="1"/><path d="M1 6 L20 6 L20 17 L1 17 Z" fill="#e9cf6a" stroke="#6a5208" stroke-width="1"/><text x="4" y="15" font-size="8" font-weight="bold" fill="#222" font-family="Liberation Sans">DT</text></svg>
<div class="t" style="left:33px;top:942.38px;font-size:22px;line-height:28px;color:#141414;font-family:'Liberation Sans', sans-serif;transform:scaleY(1.07);transform-origin:0 21.62px;">Data Ty...</div>
<svg style="position:absolute;left:134px;top:945px;" width="21" height="16" viewBox="0 0 21 16"><path d="M1 8 L8 1 L8 4.5 L20 4.5 L20 11.5 L8 11.5 L8 15 Z" fill="#a8a8a8" stroke="#999" stroke-width="0.6"/></svg>
<svg style="position:absolute;left:163px;top:951px;" width="8" height="5" viewBox="0 0 8 5"><path d="M0 0 L8 0 L4 5 Z" fill="#a0a0a0"/></svg>
<svg style="position:absolute;left:179px;top:945px;" width="21" height="16" viewBox="0 0 21 16"><path d="M20 8 L13 1 L13 4.5 L1 4.5 L1 11.5 L13 11.5 L13 15 Z" fill="#a8a8a8" stroke="#999" stroke-width="0.6"/></svg>
<svg style="position:absolute;left:208px;top:951px;" width="8" height="5" viewBox="0 0 8 5"><path d="M0 0 L8 0 L4 5 Z" fill="#a0a0a0"/></svg>
<div style="left:229px;top:944px;width:1px;height:20px;background:#cfcfcf;"></div>
<svg style="position:absolute;left:239px;top:944px;" width="21" height="20" viewBox="0 0 21 20"><path d="M4 5 L10 8 L10 13.5 L13 13.5 L13 15 M10 13.5 L10 16" stroke="#f58a10" stroke-width="1.5" fill="none"/><path d="M4 1.5 L7.5 5 L4 8.5 L0.5 5 Z" fill="#1a3ae8"/><path d="M16 1.5 L19.5 5 L16 8.5 L12.5 5 Z" fill="#111"/><path d="M16 11.5 L19.5 15 L16 18.5 L12.5 15 Z" fill="#18a828"/></svg>
<svg style="position:absolute;left:267px;top:951px;" width="8" height="5" viewBox="0 0 8 5"><path d="M0 0 L8 0 L4 5 Z" fill="#111"/></svg>
<div style="left:289px;top:944px;width:1px;height:20px;background:#cfcfcf;"></div>
<svg style="position:absolute;left:299px;top:943px;" width="22" height="21" viewBox="0 0 22 21"><defs><linearGradient id="gear1" x1="0" y1="0" x2="1" y2="1"><stop offset="0" stop-color="#c8cae8"/><stop offset="0.6" stop-color="#7a7ec0"/><stop offset="1" stop-color="#4a4e90"/></linearGradient></defs><path d="M9 0.5 L13 0.5 L13.6 3.2 L16.2 4.3 L18.6 2.8 L20.9 5.3 L19.3 7.6 L20.3 10.2 L21.5 10.6 L21.5 13.4 L20.3 14 L19.3 16.4 L20.5 18.8 L18.2 21 L15.9 19.6 L13.4 20.6 L13 21 L9 21 L8.6 20.6 L6.1 19.6 L3.8 21 L1.5 18.8 L2.7 16.4 L1.7 14 L0.5 13.4 L0.5 10.6 L1.7 10.2 L2.7 7.6 L1.1 5.3 L3.4 2.8 L5.8 4.3 L8.4 3.2 Z" fill="url(#gear1)" stroke="#5a5ea0" stroke-width="0.6"/><ellipse cx="11" cy="10.8" rx="4.6" ry="2.6" transform="rotate(-35 11 10.8)" fill="#f0f0f0" stroke="#6a6eb0" stroke-width="0.8"/></svg>
<div style="left:332px;top:944px;width:1px;height:20px;background:#cfcfcf;"></div>
<svg style="position:absolute;left:341px;top:944px;" width="23" height="21" viewBox="0 0 23 21"><rect x="4" y="1" width="17" height="15" fill="none" stroke="#7a7a7a" stroke-width="1.2"/><rect x="1" y="4" width="18" height="16" fill="#fff" stroke="#556a8a" stroke-width="1.4"/><rect x="5" y="11" width="10" height="2.2" fill="#335"/></svg>
<div style="left:368px;top:944px;width:1px;height:20px;background:#cfcfcf;"></div>
<svg style="position:absolute;left:376px;top:948px;" width="14" height="9" viewBox="0 0 14 9"><path d="M0 0 L14 0 L7 9 Z" fill="#111"/></svg>
<svg style="position:absolute;left:402px;top:947px;" width="14" height="14" viewBox="0 0 14 14"><path d="M1.5 1.5 L12.5 12.5 M12.5 1.5 L1.5 12.5" stroke="#000" stroke-width="2.6" stroke-linecap="round"/></svg>
<div style="left:2px;top:968px;width:423px;height:382px;background:#fff;border-left:1.5px solid #d2d2d2;border-right:1.5px solid #9a9a9a;"></div>
<svg style="position:absolute;left:7px;top:979px;" width="30" height="20" viewBox="0 0 30 20"><rect x="1" y="15" width="28" height="3" fill="#b0501a"/><path d="M2 18 L0 20 M28 18 L30 20" stroke="#b0501a" stroke-width="2"/><rect x="4" y="5" width="5" height="10" fill="#d2691e"/><rect x="11" y="3" width="5" height="12" fill="#2e8a3c"/><rect x="17" y="4" width="5" height="11" fill="#3a7ac8"/><rect x="23" y="7" width="4" height="8" fill="#2e8a3c"/></svg>
<div class="t" style="left:42px;top:974.58px;font-size:22px;line-height:28px;color:#111;font-family:'Liberation Sans', sans-serif;transform:scaleY(1.07);transform-origin:0 21.62px;">Data Types</div>
<svg style="position:absolute;left:12px;top:1008px;" width="10" height="14" viewBox="0 0 10 14"><path d="M2 1 L8 7 L2 13" fill="none" stroke="#a0a0a0" stroke-width="1.2"/></svg>
<svg style="position:absolute;left:38px;top:1005px;" width="16" height="20" viewBox="0 0 16 20"><path d="M2 3 L12 1 L14 3 L14 18 L4 19 L2 17 Z" fill="#e88a1a" stroke="#7a3a0a" stroke-width="0.8"/><path d="M6 5 L12 4 M6 9 L12 8 M6 13 L12 12" stroke="#fde7a0" stroke-width="1.5"/></svg>
<div class="t" style="left:69.5px;top:1003.88px;font-size:22px;line-height:28px;color:#111;font-family:'Liberation Sans', sans-serif;transform:scaleY(1.07);transform-origin:0 21.62px;letter-spacing:0.45px;">BuiltInTypes</div>
<svg style="position:absolute;left:12px;top:1038px;" width="10" height="14" viewBox="0 0 10 14"><path d="M2 1 L8 7 L2 13" fill="none" stroke="#a0a0a0" stroke-width="1.2"/></svg>
<svg style="position:absolute;left:38px;top:1035px;" width="16" height="20" viewBox="0 0 16 20"><path d="M2 3 L12 1 L14 3 L14 18 L4 19 L2 17 Z" fill="#e03030" stroke="#7a3a0a" stroke-width="0.8"/><path d="M6 5 L12 4 M6 9 L12 8 M6 13 L12 12" stroke="#fde7a0" stroke-width="1.5"/></svg>
<svg style="position:absolute;left:55px;top:1039px;" width="13" height="13" viewBox="0 0 13 13"><circle cx="6.5" cy="6.5" r="5.5" fill="#2f7fd0" stroke="#cfe0f5" stroke-width="1"/><path d="M3.5 6.5 L5.8 9 L9.5 4" stroke="#fff" stroke-width="1.4" fill="none"/></svg>
<div class="t" style="left:69.5px;top:1033.88px;font-size:22px;line-height:28px;color:#111;font-family:'Liberation Sans', sans-serif;transform:scaleY(1.07);transform-origin:0 21.62px;letter-spacing:0.15px;">liblua.so.5.1.4</div>
<svg style="position:absolute;left:12px;top:1068px;" width="10" height="14" viewBox="0 0 10 14"><path d="M2 1 L8 7 L2 13" fill="none" stroke="#a0a0a0" stroke-width="1.2"/></svg>
<svg style="position:absolute;left:38px;top:1065px;" width="16" height="20" viewBox="0 0 16 20"><path d="M2 3 L12 1 L14 3 L14 18 L4 19 L2 17 Z" fill="#2aa040" stroke="#7a3a0a" stroke-width="0.8"/><path d="M6 5 L12 4 M6 9 L12 8 M6 13 L12 12" stroke="#fde7a0" stroke-width="1.5"/></svg>
<div class="t" style="left:69.5px;top:1063.88px;font-size:22px;line-height:28px;color:#111;font-family:'Liberation Sans', sans-serif;transform:scaleY(1.07);transform-origin:0 21.62px;letter-spacing:0.1px;">generic_clib</div>
<div style="left:2px;top:1350.5px;width:423px;height:47.5px;border-top:2px solid #8a8a8a;border-left:2px solid #9a9a9a;border-bottom:3px solid #fafafa;border-right:2px solid #fafafa;background:#f2f2f2;"></div>
<div class="t" style="left:10px;top:1362.18px;font-size:22px;line-height:28px;color:#111;font-family:'Liberation Sans', sans-serif;transform:scaleY(1.07);transform-origin:0 21.62px;">Filter:</div>
<div style="left:77.5px;top:1355.5px;width:314px;height:36px;background:#fff;border:1px solid #c4c4c4;"></div>
<svg style="position:absolute;left:398px;top:1363px;" width="22" height="22" viewBox="0 0 22 22"><defs><linearGradient id="fic" x1="0" y1="0" x2="1" y2="1"><stop offset="0" stop-color="#e4efff"/><stop offset="1" stop-color="#b8d4f4"/></linearGradient></defs><path d="M4.5 1 L14 1 L18.5 5.5 L18.5 19.5 Q18.5 20.5 17.5 20.5 L5.5 20.5 Q4.5 20.5 4.5 19.5 Z" fill="url(#fic)" stroke="#5a8ede" stroke-width="1.3"/><rect x="6" y="14.5" width="11" height="2.6" fill="#4aa8f0"/><path d="M6.5 6.5 L2 11 L6.5 15.5 L9 11 Z" fill="#4a90e2"/><path d="M10.5 6.5 L15 11 L10.5 15.5 L8 11 Z" fill="#3a80d8"/><path d="M8.5 8 L10 11 L8.5 14 L7 11 Z" fill="#e8f0ff"/></svg>
<div style="left:433px;top:106px;width:1306px;height:1012px;border-right:3px solid #858585;border-bottom:3px solid #858585;border-top:1px solid #fdfdfd;border-left:1px solid #fdfdfd;"></div>
<div style="left:435px;top:109px;width:1301px;height:30px;border:2px solid #9b9b9b;background:linear-gradient(90deg,#a9a9a9 0%,#b6b6b6 30%,#c8c8c8 50%,#e0e0e0 65%,#f0f0f0 78%);box-shadow:inset 1px 1px 0 #ffffff;"></div>
<svg style="position:absolute;left:440px;top:116px;" width="17" height="15" viewBox="0 0 17 15"><rect x="0.5" y="0.5" width="16" height="14" fill="#e8f4ea" stroke="#333" stroke-width="1"/><rect x="5" y="2" width="10" height="4" fill="#2a4a8a"/><rect x="5" y="7" width="10" height="3" fill="#3a5a9a"/><rect x="1.5" y="2" width="2" height="11" fill="#fff"/><path d="M2.5 3 V4 M2.5 6 V7 M2.5 9 V10 M2.5 12 V13" stroke="#222" stroke-width="1"/></svg>
<div class="t" style="left:465px;top:111.38px;font-size:22px;line-height:28px;color:#141414;font-family:'Liberation Sans', sans-serif;transform:scaleY(1.07);transform-origin:0 21.62px;">Listing:  liblua.so.5.1.4</div>
<svg style="position:absolute;left:1438px;top:113px;" width="21" height="21" viewBox="0 0 21 21"><path d="M1 1 L8 1 L11 4 L11 14 L1 14 Z" fill="#fafafa" stroke="#c8c8c8" stroke-width="1"/><path d="M8 6 L15 6 L19 10 L19 20 L8 20 Z" fill="#fafafa" stroke="#c0c0c0" stroke-width="1"/></svg>
<svg style="position:absolute;left:1466px;top:113px;" width="21" height="21" viewBox="0 0 21 21"><rect x="1" y="3" width="14" height="16" rx="1.5" fill="#d59a4a" stroke="#8a5a1a" stroke-width="1"/><rect x="5" y="1" width="6" height="4" fill="#e8c080" stroke="#8a5a1a" stroke-width="0.8"/><path d="M9 8 L16 8 L20 12 L20 20 L9 20 Z" fill="#cfe0f7" stroke="#4a80d0" stroke-width="1.2"/></svg>
<div style="left:1497px;top:113px;width:1px;height:22px;background:#cfcfcf;"></div>
<svg style="position:absolute;left:1509px;top:114px;" width="19" height="20" viewBox="0 0 19 20"><path d="M1 1 L1 13 L4 10 L7 16 L9 15 L6 9 L10 9 Z" fill="#fff" stroke="#111" stroke-width="1.2"/><rect x="8" y="12" width="10" height="6" fill="#f5d860" stroke="#d8b020" stroke-width="0.8"/></svg>
<div style="left:1540px;top:113px;width:1px;height:22px;background:#cfcfcf;"></div>
<svg style="position:absolute;left:1551px;top:113px;" width="21" height="21" viewBox="0 0 21 21"><rect x="1" y="1" width="19" height="12" fill="#fff" stroke="#333" stroke-width="1.2"/><path d="M1 5 H20 M1 9 H20 M7 1 V5 M13 5 V9 M7 9 V13" stroke="#333" stroke-width="1"/><rect x="8" y="6" width="5" height="2" fill="#f0a030"/><path d="M10.5 14 V18 M7 16 L10.5 20 L14 16" stroke="#333" stroke-width="1.6" fill="none"/></svg>
<svg style="position:absolute;left:1578px;top:113px;" width="22" height="21" viewBox="0 0 22 21"><rect x="1" y="2" width="6" height="18" fill="#eef5ff" stroke="#6aa0e0" stroke-width="1"/><rect x="14" y="2" width="6" height="18" fill="#eef5ff" stroke="#6aa0e0" stroke-width="1"/><path d="M5 15 L9 17 L17 7" stroke="#48a848" stroke-width="2.6" fill="none"/></svg>
<div style="left:1610px;top:113px;width:1px;height:22px;background:#cfcfcf;"></div>
<svg style="position:absolute;left:1621px;top:113px;" width="21" height="20" viewBox="0 0 21 20"><rect x="1" y="5" width="19" height="14" rx="2.5" fill="#3a3a3a"/><rect x="6" y="1" width="9" height="5" rx="1" fill="#444"/><circle cx="10.5" cy="12" r="5" fill="#1a1a1a" stroke="#888" stroke-width="1.2"/></svg>
<div style="left:1652px;top:113px;width:1px;height:22px;background:#cfcfcf;"></div>
<svg style="position:absolute;left:1663px;top:113px;" width="21" height="21" viewBox="0 0 21 21"><rect x="1" y="2" width="13" height="18" fill="#f4f4f4" stroke="#333" stroke-width="0.8" stroke-dasharray="1.5 1"/><rect x="4" y="11" width="8" height="5" fill="#7aa0d0"/><rect x="15" y="1" width="5" height="19" rx="1" fill="#e8b850" stroke="#b8861a" stroke-width="0.8"/></svg>
<svg style="position:absolute;left:1691px;top:120px;" width="8" height="5" viewBox="0 0 8 5"><path d="M0 0 L8 0 L4 5 Z" fill="#111"/></svg>
<div style="left:1706px;top:113px;width:1px;height:22px;background:#cfcfcf;"></div>
<svg style="position:absolute;left:1714px;top:117px;" width="14" height="14" viewBox="0 0 14 14"><path d="M1.5 1.5 L12.5 12.5 M12.5 1.5 L1.5 12.5" stroke="#000" stroke-width="2.6" stroke-linecap="round"/></svg>
<div style="left:435px;top:139px;width:1301px;height:976px;background:#fff;"></div>
<div style="left:436px;top:139px;width:19px;height:975px;background:#f2f2f2;"></div>
<div style="left:443.5px;top:140px;width:3.5px;height:98px;background:#a9a9a9;"></div>
<div style="left:443.5px;top:278px;width:3.5px;height:100px;background:#a9a9a9;"></div>
<div style="left:443.5px;top:418px;width:3.5px;height:100px;background:#a9a9a9;"></div>
<div style="left:443.5px;top:579px;width:3.5px;height:100px;background:#a9a9a9;"></div>
<div style="left:443.5px;top:739px;width:3.5px;height:100px;background:#a9a9a9;"></div>
<div style="left:543px;top:139px;width:5.5px;height:975px;background:#f2f2f2;"></div>
<div style="left:548.5px;top:139px;width:1px;height:975px;background:#c8c8c8;"></div>
<div style="left:543.5px;top:616.3px;width:4.4px;height:4.4px;border-radius:50%;background:#bdbdbd;"></div>
<div style="left:543.5px;top:624.8px;width:4.4px;height:4.4px;border-radius:50%;background:#bdbdbd;"></div>
<div style="left:543.5px;top:633.8px;width:4.4px;height:4.4px;border-radius:50%;background:#bdbdbd;"></div>
<div style="left:1699px;top:139px;width:37px;height:975px;background:#f2f2f2;"></div>
<div style="left:1702px;top:1011px;width:8px;height:27px;background:#dadada;border-radius:4px;"></div>
<div style="left:1723.5px;top:173px;width:11.5px;height:921.5px;background:#a9a9a9;"></div>
<div style="left:1723.5px;top:270px;width:11.5px;height:2.5px;background:#fff;"></div>
<div style="left:1723.5px;top:390.7px;width:11.5px;height:6.900000000000034px;background:#fff;"></div>
<div style="left:1723.5px;top:479.8px;width:11.5px;height:10.199999999999989px;background:#fff;"></div>
<div style="left:1723.5px;top:974.6px;width:11.5px;height:2.3999999999999773px;background:#fff;"></div>
<div style="left:1723.5px;top:1082.4px;width:11.5px;height:2.199999999999818px;background:#fff;"></div>
<div style="left:1714.5px;top:157.9px;width:13px;height:7px;background:#d6c9a0;border:1.5px solid #f8e89a;"></div>
<div style="left:1714.5px;top:164.4px;width:13px;height:7px;background:#d6c9a0;border:1.5px solid #f8e89a;"></div>
<div style="left:1714.5px;top:174.5px;width:13px;height:7px;background:#d6c9a0;border:1.5px solid #f5cc1a;"></div>
<div style="left:1714.5px;top:324.1px;width:13px;height:7px;background:#d6c9a0;border:1.5px solid #f5cc1a;"></div>
<div style="left:1714.5px;top:325.5px;width:13px;height:7px;background:#d6c9a0;border:1.5px solid #f5cc1a;"></div>
<div style="left:1714.5px;top:344.1px;width:13px;height:7px;background:#d6c9a0;border:1.5px solid #f5cc1a;"></div>
<div style="left:1714.5px;top:437.5px;width:13px;height:7px;background:#d6c9a0;border:1.5px solid #f5cc1a;"></div>
<div style="left:1714.5px;top:539.2px;width:13px;height:7px;background:#d6c9a0;border:1.5px solid #f5a01a;"></div>
<div style="left:1714.5px;top:584.1px;width:13px;height:7px;background:#d6c9a0;border:1.5px solid #f5cc1a;"></div>
<div style="left:1714.5px;top:609.0px;width:13px;height:7px;background:#d6c9a0;border:1.5px solid #f5cc1a;"></div>
<div style="left:1714.5px;top:683.5px;width:13px;height:7px;background:#d6c9a0;border:1.5px solid #f5a01a;"></div>
<div style="left:1714.5px;top:706.5px;width:13px;height:7px;background:#d6c9a0;border:1.5px solid #f5cc1a;"></div>
<div style="left:1714.5px;top:745.5px;width:13px;height:7px;background:#d6c9a0;border:1.5px solid #f5a01a;"></div>
<div style="left:1714.5px;top:757.5px;width:13px;height:7px;background:#d6c9a0;border:1.5px solid #f5cc1a;"></div>
<div style="left:1714.5px;top:762.5px;width:13px;height:7px;background:#d6c9a0;border:1.5px solid #f5a01a;"></div>
<div style="left:1714.5px;top:772.5px;width:13px;height:7px;background:#d6c9a0;border:1.5px solid #f5a01a;"></div>
<div style="left:1714.5px;top:807.5px;width:13px;height:7px;background:#d6c9a0;border:1.5px solid #f5a01a;"></div>
<div style="left:1714.5px;top:827.5px;width:13px;height:7px;background:#d6c9a0;border:1.5px solid #f5a01a;"></div>
<div style="left:1714.5px;top:841.5px;width:13px;height:7px;background:#d6c9a0;border:1.5px solid #f5a01a;"></div>
<div style="left:1714.5px;top:884.5px;width:13px;height:7px;background:#d6c9a0;border:1.5px solid #f5cc1a;"></div>
<div style="left:1714.5px;top:897.5px;width:13px;height:7px;background:#d6c9a0;border:1.5px solid #f5cc1a;"></div>
<div style="left:1714.5px;top:987.9px;width:13px;height:7px;background:#d6c9a0;border:1.5px solid #f5a01a;"></div>
<div style="left:1714.5px;top:997.5px;width:13px;height:7px;background:#d6c9a0;border:1.5px solid #f5a01a;"></div>
<div style="left:1714.5px;top:1002.5px;width:13px;height:7px;background:#d6c9a0;border:1.5px solid #f5a01a;"></div>
<div style="left:1714.5px;top:1008.5px;width:13px;height:7px;background:#d6c9a0;border:1.5px solid #f5a01a;"></div>
<div style="left:1714.5px;top:1014.5px;width:13px;height:7px;background:#d6c9a0;border:1.5px solid #f5cc1a;"></div>
<div style="left:1714.5px;top:1020.5px;width:13px;height:7px;background:#d6c9a0;border:1.5px solid #f5cc1a;"></div>
<div style="left:1714.5px;top:1027.0px;width:13px;height:7px;background:#d6c9a0;border:1.5px solid #f8e89a;"></div>
<div style="left:1714.5px;top:1034.1px;width:13px;height:7px;background:#d6c9a0;border:1.5px solid #d8e4f0;"></div>
<div style="left:1714.5px;top:1039.5px;width:13px;height:7px;background:#d6c9a0;border:1.5px solid #f8e89a;"></div>
<div style="left:1714.5px;top:1044.5px;width:13px;height:7px;background:#d6c9a0;border:1.5px solid #f8e89a;"></div>
<div style="left:1714.5px;top:1049.5px;width:13px;height:7px;background:#d6c9a0;border:1.5px solid #f8e89a;"></div>
<div style="left:1714.5px;top:1054.5px;width:13px;height:7px;background:#d6c9a0;border:1.5px solid #f8e89a;"></div>
<div style="left:1714.5px;top:1067.5px;width:13px;height:7px;background:#d6c9a0;border:1.5px solid #f8e89a;"></div>
<div style="left:1714.5px;top:1073.5px;width:13px;height:7px;background:#d6c9a0;border:1.5px solid #f5a01a;"></div>
<div style="left:1714.5px;top:1078.5px;width:13px;height:7px;background:#d6c9a0;border:1.5px solid #f5a01a;"></div>
<div style="left:1714.5px;top:1082.5px;width:13px;height:7px;background:#d6c9a0;border:1.5px solid #f5a01a;"></div>
<div style="left:1714.5px;top:1086.5px;width:13px;height:7px;background:#d6c9a0;border:1.5px solid #f5a01a;"></div>
<div style="left:549px;top:1096.5px;width:1150px;height:17px;background:#f2f2f2;"></div>
<div style="left:553px;top:1100.5px;width:1005px;height:9px;background:#d9d9d9;border-radius:4.5px;"></div>
<div class="t" style="left:799.5px;top:160.90px;font-size:14.65px;line-height:18px;color:#2a2ae6;font-family:'Liberation Mono', monospace;transform:scaleY(1.1);transform-origin:0 12.90px;">s_GETGLOBAL_000384ac</div>
<div class="t" style="left:1222.5px;top:160.90px;font-size:14.65px;line-height:18px;color:#1e7a1e;font-family:'Liberation Mono', monospace;transform:scaleY(1.1);transform-origin:0 12.90px;">XREF[1]:</div>
<div class="t" style="left:1334.9px;top:160.90px;font-size:14.65px;line-height:18px;color:#1e7a1e;font-family:'Liberation Mono', monospace;transform:scaleY(1.1);transform-origin:0 12.90px;">0004a09c</div>
<div class="t" style="left:1405.22px;top:160.90px;font-size:14.65px;line-height:18px;color:#222;font-family:'Liberation Mono', monospace;transform:scaleY(1.1);transform-origin:0 12.90px;">(*)</div>
<div class="t" style="left:620.5px;top:180.90px;font-size:14.65px;line-height:18px;color:#222222;font-family:'Liberation Mono', monospace;transform:scaleY(1.1);transform-origin:0 12.90px;">000384ac</div>
<div class="t" style="left:699.3px;top:180.90px;font-size:14.65px;line-height:18px;color:#1f1fe0;font-family:'Liberation Mono', monospace;transform:scaleY(1.1);transform-origin:0 12.90px;">47 45 54</div>
<div class="t" style="left:699.3px;top:200.90px;font-size:14.65px;line-height:18px;color:#1f1fe0;font-family:'Liberation Mono', monospace;transform:scaleY(1.1);transform-origin:0 12.90px;">47 4c 4f</div>
<div class="t" style="left:699.3px;top:220.90px;font-size:14.65px;line-height:18px;color:#1f1fe0;font-family:'Liberation Mono', monospace;transform:scaleY(1.1);transform-origin:0 12.90px;">42 41 4c 00</div>
<div class="t" style="left:836.7px;top:180.90px;font-size:14.65px;line-height:18px;color:#222288;font-family:'Liberation Mono', monospace;transform:scaleY(1.1);transform-origin:0 12.90px;">ds</div>
<div class="t" style="left:937px;top:180.90px;font-size:14.65px;line-height:18px;color:#1e8c1e;font-family:'Liberation Mono', monospace;transform:scaleY(1.1);transform-origin:0 12.90px;">&quot;GETGLOBAL&quot;</div>
<div class="t" style="left:620.5px;top:240.90px;font-size:14.65px;line-height:18px;color:#222222;font-family:'Liberation Mono', monospace;transform:scaleY(1.1);transform-origin:0 12.90px;">000384b6</div>
<div class="t" style="left:699.3px;top:240.90px;font-size:14.65px;line-height:18px;color:#1f1fe0;font-family:'Liberation Mono', monospace;transform:scaleY(1.1);transform-origin:0 12.90px;">00</div>
<div class="t" style="left:836.7px;top:240.90px;font-size:14.65px;line-height:18px;color:#222288;font-family:'Liberation Mono', monospace;transform:scaleY(1.1);transform-origin:0 12.90px;">??</div>
<div class="t" style="left:937px;top:240.90px;font-size:14.65px;line-height:18px;color:#1e8c1e;font-family:'Liberation Mono', monospace;transform:scaleY(1.1);transform-origin:0 12.90px;">00h</div>
<div class="t" style="left:620.5px;top:260.90px;font-size:14.65px;line-height:18px;color:#222222;font-family:'Liberation Mono', monospace;transform:scaleY(1.1);transform-origin:0 12.90px;">000384b7</div>
<div class="t" style="left:699.3px;top:260.90px;font-size:14.65px;line-height:18px;color:#1f1fe0;font-family:'Liberation Mono', monospace;transform:scaleY(1.1);transform-origin:0 12.90px;">00</div>
<div class="t" style="left:836.7px;top:260.90px;font-size:14.65px;line-height:18px;color:#222288;font-family:'Liberation Mono', monospace;transform:scaleY(1.1);transform-origin:0 12.90px;">??</div>
<div class="t" style="left:937px;top:260.90px;font-size:14.65px;line-height:18px;color:#1e8c1e;font-family:'Liberation Mono', monospace;transform:scaleY(1.1);transform-origin:0 12.90px;">00h</div>
<div class="t" style="left:799.5px;top:300.90px;font-size:14.65px;line-height:18px;color:#2a2ae6;font-family:'Liberation Mono', monospace;transform:scaleY(1.1);transform-origin:0 12.90px;">s_SETGLOBAL_000384b8</div>
<div class="t" style="left:1222.5px;top:300.90px;font-size:14.65px;line-height:18px;color:#1e7a1e;font-family:'Liberation Mono', monospace;transform:scaleY(1.1);transform-origin:0 12.90px;">XREF[1]:</div>
<div class="t" style="left:1334.9px;top:300.90px;font-size:14.65px;line-height:18px;color:#1e7a1e;font-family:'Liberation Mono', monospace;transform:scaleY(1.1);transform-origin:0 12.90px;">0004a0a0</div>
<div class="t" style="left:1405.22px;top:300.90px;font-size:14.65px;line-height:18px;color:#222;font-family:'Liberation Mono', monospace;transform:scaleY(1.1);transform-origin:0 12.90px;">(*)</div>
<div class="t" style="left:620.5px;top:320.90px;font-size:14.65px;line-height:18px;color:#222222;font-family:'Liberation Mono', monospace;transform:scaleY(1.1);transform-origin:0 12.90px;">000384b8</div>
<div class="t" style="left:699.3px;top:320.90px;font-size:14.65px;line-height:18px;color:#1f1fe0;font-family:'Liberation Mono', monospace;transform:scaleY(1.1);transform-origin:0 12.90px;">53 45 54</div>
<div class="t" style="left:699.3px;top:340.90px;font-size:14.65px;line-height:18px;color:#1f1fe0;font-family:'Liberation Mono', monospace;transform:scaleY(1.1);transform-origin:0 12.90px;">47 4c 4f</div>
<div class="t" style="left:699.3px;top:360.90px;font-size:14.65px;line-height:18px;color:#1f1fe0;font-family:'Liberation Mono', monospace;transform:scaleY(1.1);transform-origin:0 12.90px;">42 41 4c 00</div>
<div class="t" style="left:836.7px;top:320.90px;font-size:14.65px;line-height:18px;color:#222288;font-family:'Liberation Mono', monospace;transform:scaleY(1.1);transform-origin:0 12.90px;">ds</div>
<div class="t" style="left:937px;top:320.90px;font-size:14.65px;line-height:18px;color:#1e8c1e;font-family:'Liberation Mono', monospace;transform:scaleY(1.1);transform-origin:0 12.90px;">&quot;SETGLOBAL&quot;</div>
<div class="t" style="left:620.5px;top:380.90px;font-size:14.65px;line-height:18px;color:#222222;font-family:'Liberation Mono', monospace;transform:scaleY(1.1);transform-origin:0 12.90px;">000384c2</div>
<div class="t" style="left:699.3px;top:380.90px;font-size:14.65px;line-height:18px;color:#1f1fe0;font-family:'Liberation Mono', monospace;transform:scaleY(1.1);transform-origin:0 12.90px;">00</div>
<div class="t" style="left:836.7px;top:380.90px;font-size:14.65px;line-height:18px;color:#222288;font-family:'Liberation Mono', monospace;transform:scaleY(1.1);transform-origin:0 12.90px;">??</div>
<div class="t" style="left:937px;top:380.90px;font-size:14.65px;line-height:18px;color:#1e8c1e;font-family:'Liberation Mono', monospace;transform:scaleY(1.1);transform-origin:0 12.90px;">00h</div>
<div class="t" style="left:620.5px;top:400.90px;font-size:14.65px;line-height:18px;color:#222222;font-family:'Liberation Mono', monospace;transform:scaleY(1.1);transform-origin:0 12.90px;">000384c3</div>
<div class="t" style="left:699.3px;top:400.90px;font-size:14.65px;line-height:18px;color:#1f1fe0;font-family:'Liberation Mono', monospace;transform:scaleY(1.1);transform-origin:0 12.90px;">00</div>
<div class="t" style="left:836.7px;top:400.90px;font-size:14.65px;line-height:18px;color:#222288;font-family:'Liberation Mono', monospace;transform:scaleY(1.1);transform-origin:0 12.90px;">??</div>
<div class="t" style="left:937px;top:400.90px;font-size:14.65px;line-height:18px;color:#1e8c1e;font-family:'Liberation Mono', monospace;transform:scaleY(1.1);transform-origin:0 12.90px;">00h</div>
<div class="t" style="left:799.5px;top:440.90px;font-size:14.65px;line-height:18px;color:#2a2ae6;font-family:'Liberation Mono', monospace;transform:scaleY(1.1);transform-origin:0 12.90px;">s_SETUPVAL_000384c4</div>
<div class="t" style="left:1222.5px;top:440.90px;font-size:14.65px;line-height:18px;color:#1e7a1e;font-family:'Liberation Mono', monospace;transform:scaleY(1.1);transform-origin:0 12.90px;">XREF[1]:</div>
<div class="t" style="left:1334.9px;top:440.90px;font-size:14.65px;line-height:18px;color:#1e7a1e;font-family:'Liberation Mono', monospace;transform:scaleY(1.1);transform-origin:0 12.90px;">0004a0a4</div>
<div class="t" style="left:1405.22px;top:440.90px;font-size:14.65px;line-height:18px;color:#222;font-family:'Liberation Mono', monospace;transform:scaleY(1.1);transform-origin:0 12.90px;">(*)</div>
<div class="t" style="left:620.5px;top:460.90px;font-size:14.65px;line-height:18px;color:#222222;font-family:'Liberation Mono', monospace;transform:scaleY(1.1);transform-origin:0 12.90px;">000384c4</div>
<div class="t" style="left:699.3px;top:460.90px;font-size:14.65px;line-height:18px;color:#1f1fe0;font-family:'Liberation Mono', monospace;transform:scaleY(1.1);transform-origin:0 12.90px;">53 45 54</div>
<div class="t" style="left:699.3px;top:480.90px;font-size:14.65px;line-height:18px;color:#1f1fe0;font-family:'Liberation Mono', monospace;transform:scaleY(1.1);transform-origin:0 12.90px;">55 50 56</div>
<div class="t" style="left:699.3px;top:500.90px;font-size:14.65px;line-height:18px;color:#1f1fe0;font-family:'Liberation Mono', monospace;transform:scaleY(1.1);transform-origin:0 12.90px;">41 4c 00</div>
<div class="t" style="left:836.7px;top:460.90px;font-size:14.65px;line-height:18px;color:#222288;font-family:'Liberation Mono', monospace;transform:scaleY(1.1);transform-origin:0 12.90px;">ds</div>
<div class="t" style="left:937px;top:460.90px;font-size:14.65px;line-height:18px;color:#1e8c1e;font-family:'Liberation Mono', monospace;transform:scaleY(1.1);transform-origin:0 12.90px;">&quot;SETUPVAL&quot;</div>
<div class="t" style="left:620.5px;top:520.90px;font-size:14.65px;line-height:18px;color:#222222;font-family:'Liberation Mono', monospace;transform:scaleY(1.1);transform-origin:0 12.90px;">000384cd</div>
<div class="t" style="left:699.3px;top:520.90px;font-size:14.65px;line-height:18px;color:#1f1fe0;font-family:'Liberation Mono', monospace;transform:scaleY(1.1);transform-origin:0 12.90px;">00</div>
<div class="t" style="left:836.7px;top:520.90px;font-size:14.65px;line-height:18px;color:#222288;font-family:'Liberation Mono', monospace;transform:scaleY(1.1);transform-origin:0 12.90px;">??</div>
<div class="t" style="left:937px;top:520.90px;font-size:14.65px;line-height:18px;color:#1e8c1e;font-family:'Liberation Mono', monospace;transform:scaleY(1.1);transform-origin:0 12.90px;">00h</div>
<div class="t" style="left:620.5px;top:540.90px;font-size:14.65px;line-height:18px;color:#222222;font-family:'Liberation Mono', monospace;transform:scaleY(1.1);transform-origin:0 12.90px;">000384ce</div>
<div class="t" style="left:699.3px;top:540.90px;font-size:14.65px;line-height:18px;color:#1f1fe0;font-family:'Liberation Mono', monospace;transform:scaleY(1.1);transform-origin:0 12.90px;">00</div>
<div class="t" style="left:836.7px;top:540.90px;font-size:14.65px;line-height:18px;color:#222288;font-family:'Liberation Mono', monospace;transform:scaleY(1.1);transform-origin:0 12.90px;">??</div>
<div class="t" style="left:937px;top:540.90px;font-size:14.65px;line-height:18px;color:#1e8c1e;font-family:'Liberation Mono', monospace;transform:scaleY(1.1);transform-origin:0 12.90px;">00h</div>
<div class="t" style="left:620.5px;top:560.90px;font-size:14.65px;line-height:18px;color:#222222;font-family:'Liberation Mono', monospace;transform:scaleY(1.1);transform-origin:0 12.90px;">000384cf</div>
<div class="t" style="left:699.3px;top:560.90px;font-size:14.65px;line-height:18px;color:#1f1fe0;font-family:'Liberation Mono', monospace;transform:scaleY(1.1);transform-origin:0 12.90px;">00</div>
<div class="t" style="left:836.7px;top:560.90px;font-size:14.65px;line-height:18px;color:#222288;font-family:'Liberation Mono', monospace;transform:scaleY(1.1);transform-origin:0 12.90px;">??</div>
<div class="t" style="left:937px;top:560.90px;font-size:14.65px;line-height:18px;color:#1e8c1e;font-family:'Liberation Mono', monospace;transform:scaleY(1.1);transform-origin:0 12.90px;">00h</div>
<div class="t" style="left:799.5px;top:600.90px;font-size:14.65px;line-height:18px;color:#2a2ae6;font-family:'Liberation Mono', monospace;transform:scaleY(1.1);transform-origin:0 12.90px;">s_SETTABLE_000384d0</div>
<div class="t" style="left:1222.5px;top:600.90px;font-size:14.65px;line-height:18px;color:#1e7a1e;font-family:'Liberation Mono', monospace;transform:scaleY(1.1);transform-origin:0 12.90px;">XREF[1]:</div>
<div class="t" style="left:1334.9px;top:600.90px;font-size:14.65px;line-height:18px;color:#1e7a1e;font-family:'Liberation Mono', monospace;transform:scaleY(1.1);transform-origin:0 12.90px;">0004a0a8</div>
<div class="t" style="left:1405.22px;top:600.90px;font-size:14.65px;line-height:18px;color:#222;font-family:'Liberation Mono', monospace;transform:scaleY(1.1);transform-origin:0 12.90px;">(*)</div>
<div class="t" style="left:620.5px;top:620.90px;font-size:14.65px;line-height:18px;color:#222222;font-family:'Liberation Mono', monospace;transform:scaleY(1.1);transform-origin:0 12.90px;">000384d0</div>
<div class="t" style="left:699.3px;top:620.90px;font-size:14.65px;line-height:18px;color:#1f1fe0;font-family:'Liberation Mono', monospace;transform:scaleY(1.1);transform-origin:0 12.90px;">53 45 54</div>
<div class="t" style="left:699.3px;top:640.90px;font-size:14.65px;line-height:18px;color:#1f1fe0;font-family:'Liberation Mono', monospace;transform:scaleY(1.1);transform-origin:0 12.90px;">54 41 42</div>
<div class="t" style="left:699.3px;top:660.90px;font-size:14.65px;line-height:18px;color:#1f1fe0;font-family:'Liberation Mono', monospace;transform:scaleY(1.1);transform-origin:0 12.90px;">4c 45 00</div>
<div class="t" style="left:836.7px;top:620.90px;font-size:14.65px;line-height:18px;color:#222288;font-family:'Liberation Mono', monospace;transform:scaleY(1.1);transform-origin:0 12.90px;">ds</div>
<div class="t" style="left:937px;top:620.90px;font-size:14.65px;line-height:18px;color:#1e8c1e;font-family:'Liberation Mono', monospace;transform:scaleY(1.1);transform-origin:0 12.90px;">&quot;SETTABLE&quot;</div>
<div class="t" style="left:620.5px;top:680.90px;font-size:14.65px;line-height:18px;color:#222222;font-family:'Liberation Mono', monospace;transform:scaleY(1.1);transform-origin:0 12.90px;">000384d9</div>
<div class="t" style="left:699.3px;top:680.90px;font-size:14.65px;line-height:18px;color:#1f1fe0;font-family:'Liberation Mono', monospace;transform:scaleY(1.1);transform-origin:0 12.90px;">00</div>
<div class="t" style="left:836.7px;top:680.90px;font-size:14.65px;line-height:18px;color:#222288;font-family:'Liberation Mono', monospace;transform:scaleY(1.1);transform-origin:0 12.90px;">??</div>
<div class="t" style="left:937px;top:680.90px;font-size:14.65px;line-height:18px;color:#1e8c1e;font-family:'Liberation Mono', monospace;transform:scaleY(1.1);transform-origin:0 12.90px;">00h</div>
<div class="t" style="left:620.5px;top:700.90px;font-size:14.65px;line-height:18px;color:#222222;font-family:'Liberation Mono', monospace;transform:scaleY(1.1);transform-origin:0 12.90px;">000384da</div>
<div class="t" style="left:699.3px;top:700.90px;font-size:14.65px;line-height:18px;color:#1f1fe0;font-family:'Liberation Mono', monospace;transform:scaleY(1.1);transform-origin:0 12.90px;">00</div>
<div class="t" style="left:836.7px;top:700.90px;font-size:14.65px;line-height:18px;color:#222288;font-family:'Liberation Mono', monospace;transform:scaleY(1.1);transform-origin:0 12.90px;">??</div>
<div class="t" style="left:937px;top:700.90px;font-size:14.65px;line-height:18px;color:#1e8c1e;font-family:'Liberation Mono', monospace;transform:scaleY(1.1);transform-origin:0 12.90px;">00h</div>
<div class="t" style="left:620.5px;top:720.90px;font-size:14.65px;line-height:18px;color:#222222;font-family:'Liberation Mono', monospace;transform:scaleY(1.1);transform-origin:0 12.90px;">000384db</div>
<div class="t" style="left:699.3px;top:720.90px;font-size:14.65px;line-height:18px;color:#1f1fe0;font-family:'Liberation Mono', monospace;transform:scaleY(1.1);transform-origin:0 12.90px;">00</div>
<div class="t" style="left:836.7px;top:720.90px;font-size:14.65px;line-height:18px;color:#222288;font-family:'Liberation Mono', monospace;transform:scaleY(1.1);transform-origin:0 12.90px;">??</div>
<div class="t" style="left:937px;top:720.90px;font-size:14.65px;line-height:18px;color:#1e8c1e;font-family:'Liberation Mono', monospace;transform:scaleY(1.1);transform-origin:0 12.90px;">00h</div>
<div class="t" style="left:799.5px;top:760.90px;font-size:14.65px;line-height:18px;color:#2a2ae6;font-family:'Liberation Mono', monospace;transform:scaleY(1.1);transform-origin:0 12.90px;">s_NEWTABLE_000384dc</div>
<div class="t" style="left:1222.5px;top:760.90px;font-size:14.65px;line-height:18px;color:#1e7a1e;font-family:'Liberation Mono', monospace;transform:scaleY(1.1);transform-origin:0 12.90px;">XREF[1]:</div>
<div class="t" style="left:1334.9px;top:760.90px;font-size:14.65px;line-height:18px;color:#1e7a1e;font-family:'Liberation Mono', monospace;transform:scaleY(1.1);transform-origin:0 12.90px;">0004a0ac</div>
<div class="t" style="left:1405.22px;top:760.90px;font-size:14.65px;line-height:18px;color:#222;font-family:'Liberation Mono', monospace;transform:scaleY(1.1);transform-origin:0 12.90px;">(*)</div>
<div class="t" style="left:620.5px;top:780.90px;font-size:14.65px;line-height:18px;color:#222222;font-family:'Liberation Mono', monospace;transform:scaleY(1.1);transform-origin:0 12.90px;">000384dc</div>
<div class="t" style="left:699.3px;top:780.90px;font-size:14.65px;line-height:18px;color:#1f1fe0;font-family:'Liberation Mono', monospace;transform:scaleY(1.1);transform-origin:0 12.90px;">4e 45 57</div>
<div class="t" style="left:699.3px;top:800.90px;font-size:14.65px;line-height:18px;color:#1f1fe0;font-family:'Liberation Mono', monospace;transform:scaleY(1.1);transform-origin:0 12.90px;">54 41 42</div>
<div class="t" style="left:699.3px;top:820.90px;font-size:14.65px;line-height:18px;color:#1f1fe0;font-family:'Liberation Mono', monospace;transform:scaleY(1.1);transform-origin:0 12.90px;">4c 45 00</div>
<div class="t" style="left:836.7px;top:780.90px;font-size:14.65px;line-height:18px;color:#222288;font-family:'Liberation Mono', monospace;transform:scaleY(1.1);transform-origin:0 12.90px;">ds</div>
<div class="t" style="left:937px;top:780.90px;font-size:14.65px;line-height:18px;color:#1e8c1e;font-family:'Liberation Mono', monospace;transform:scaleY(1.1);transform-origin:0 12.90px;">&quot;NEWTABLE&quot;</div>
<div class="t" style="left:620.5px;top:840.90px;font-size:14.65px;line-height:18px;color:#222222;font-family:'Liberation Mono', monospace;transform:scaleY(1.1);transform-origin:0 12.90px;">000384e5</div>
<div class="t" style="left:699.3px;top:840.90px;font-size:14.65px;line-height:18px;color:#1f1fe0;font-family:'Liberation Mono', monospace;transform:scaleY(1.1);transform-origin:0 12.90px;">00</div>
<div class="t" style="left:836.7px;top:840.90px;font-size:14.65px;line-height:18px;color:#222288;font-family:'Liberation Mono', monospace;transform:scaleY(1.1);transform-origin:0 12.90px;">??</div>
<div class="t" style="left:937px;top:840.90px;font-size:14.65px;line-height:18px;color:#1e8c1e;font-family:'Liberation Mono', monospace;transform:scaleY(1.1);transform-origin:0 12.90px;">00h</div>
<div class="t" style="left:620.5px;top:860.90px;font-size:14.65px;line-height:18px;color:#222222;font-family:'Liberation Mono', monospace;transform:scaleY(1.1);transform-origin:0 12.90px;">000384e6</div>
<div class="t" style="left:699.3px;top:860.90px;font-size:14.65px;line-height:18px;color:#1f1fe0;font-family:'Liberation Mono', monospace;transform:scaleY(1.1);transform-origin:0 12.90px;">00</div>
<div class="t" style="left:836.7px;top:860.90px;font-size:14.65px;line-height:18px;color:#222288;font-family:'Liberation Mono', monospace;transform:scaleY(1.1);transform-origin:0 12.90px;">??</div>
<div class="t" style="left:937px;top:860.90px;font-size:14.65px;line-height:18px;color:#1e8c1e;font-family:'Liberation Mono', monospace;transform:scaleY(1.1);transform-origin:0 12.90px;">00h</div>
<div class="t" style="left:620.5px;top:880.90px;font-size:14.65px;line-height:18px;color:#222222;font-family:'Liberation Mono', monospace;transform:scaleY(1.1);transform-origin:0 12.90px;">000384e7</div>
<div class="t" style="left:699.3px;top:880.90px;font-size:14.65px;line-height:18px;color:#1f1fe0;font-family:'Liberation Mono', monospace;transform:scaleY(1.1);transform-origin:0 12.90px;">00</div>
<div class="t" style="left:836.7px;top:880.90px;font-size:14.65px;line-height:18px;color:#222288;font-family:'Liberation Mono', monospace;transform:scaleY(1.1);transform-origin:0 12.90px;">??</div>
<div class="t" style="left:937px;top:880.90px;font-size:14.65px;line-height:18px;color:#1e8c1e;font-family:'Liberation Mono', monospace;transform:scaleY(1.1);transform-origin:0 12.90px;">00h</div>
<div class="t" style="left:799.5px;top:920.90px;font-size:14.65px;line-height:18px;color:#2a2ae6;font-family:'Liberation Mono', monospace;transform:scaleY(1.1);transform-origin:0 12.90px;">DAT_000384e8</div>
<div class="t" style="left:1222.5px;top:920.90px;font-size:14.65px;line-height:18px;color:#1e7a1e;font-family:'Liberation Mono', monospace;transform:scaleY(1.1);transform-origin:0 12.90px;">XREF[1]:</div>
<div class="t" style="left:1334.9px;top:920.90px;font-size:14.65px;line-height:18px;color:#1e7a1e;font-family:'Liberation Mono', monospace;transform:scaleY(1.1);transform-origin:0 12.90px;">0004a0b0</div>
<div class="t" style="left:1405.22px;top:920.90px;font-size:14.65px;line-height:18px;color:#222;font-family:'Liberation Mono', monospace;transform:scaleY(1.1);transform-origin:0 12.90px;">(*)</div>
<div class="t" style="left:620.5px;top:940.90px;font-size:14.65px;line-height:18px;color:#222222;font-family:'Liberation Mono', monospace;transform:scaleY(1.1);transform-origin:0 12.90px;">000384e8</div>
<div class="t" style="left:699.3px;top:940.90px;font-size:14.65px;line-height:18px;color:#1f1fe0;font-family:'Liberation Mono', monospace;transform:scaleY(1.1);transform-origin:0 12.90px;">53</div>
<div class="t" style="left:836.7px;top:940.90px;font-size:14.65px;line-height:18px;color:#222288;font-family:'Liberation Mono', monospace;transform:scaleY(1.1);transform-origin:0 12.90px;">??</div>
<div class="t" style="left:937px;top:940.90px;font-size:14.65px;line-height:18px;color:#1e8c1e;font-family:'Liberation Mono', monospace;transform:scaleY(1.1);transform-origin:0 12.90px;">53h</div>
<div class="t" style="left:998px;top:940.90px;font-size:14.65px;line-height:18px;color:#1e8c1e;font-family:'Liberation Mono', monospace;transform:scaleY(1.1);transform-origin:0 12.90px;">S</div>
<div class="t" style="left:620.5px;top:960.90px;font-size:14.65px;line-height:18px;color:#222222;font-family:'Liberation Mono', monospace;transform:scaleY(1.1);transform-origin:0 12.90px;">000384e9</div>
<div class="t" style="left:699.3px;top:960.90px;font-size:14.65px;line-height:18px;color:#1f1fe0;font-family:'Liberation Mono', monospace;transform:scaleY(1.1);transform-origin:0 12.90px;">45</div>
<div class="t" style="left:836.7px;top:960.90px;font-size:14.65px;line-height:18px;color:#222288;font-family:'Liberation Mono', monospace;transform:scaleY(1.1);transform-origin:0 12.90px;">??</div>
<div class="t" style="left:937px;top:960.90px;font-size:14.65px;line-height:18px;color:#1e8c1e;font-family:'Liberation Mono', monospace;transform:scaleY(1.1);transform-origin:0 12.90px;">45h</div>
<div class="t" style="left:998px;top:960.90px;font-size:14.65px;line-height:18px;color:#1e8c1e;font-family:'Liberation Mono', monospace;transform:scaleY(1.1);transform-origin:0 12.90px;">E</div>
<div class="t" style="left:620.5px;top:980.90px;font-size:14.65px;line-height:18px;color:#222222;font-family:'Liberation Mono', monospace;transform:scaleY(1.1);transform-origin:0 12.90px;">000384ea</div>
<div class="t" style="left:699.3px;top:980.90px;font-size:14.65px;line-height:18px;color:#1f1fe0;font-family:'Liberation Mono', monospace;transform:scaleY(1.1);transform-origin:0 12.90px;">4c</div>
<div class="t" style="left:836.7px;top:980.90px;font-size:14.65px;line-height:18px;color:#222288;font-family:'Liberation Mono', monospace;transform:scaleY(1.1);transform-origin:0 12.90px;">??</div>
<div class="t" style="left:937px;top:980.90px;font-size:14.65px;line-height:18px;color:#1e8c1e;font-family:'Liberation Mono', monospace;transform:scaleY(1.1);transform-origin:0 12.90px;">4Ch</div>
<div class="t" style="left:998px;top:980.90px;font-size:14.65px;line-height:18px;color:#1e8c1e;font-family:'Liberation Mono', monospace;transform:scaleY(1.1);transform-origin:0 12.90px;">L</div>
<div class="t" style="left:620.5px;top:1000.90px;font-size:14.65px;line-height:18px;color:#222222;font-family:'Liberation Mono', monospace;transform:scaleY(1.1);transform-origin:0 12.90px;">000384eb</div>
<div class="t" style="left:699.3px;top:1000.90px;font-size:14.65px;line-height:18px;color:#1f1fe0;font-family:'Liberation Mono', monospace;transform:scaleY(1.1);transform-origin:0 12.90px;">46</div>
<div class="t" style="left:836.7px;top:1000.90px;font-size:14.65px;line-height:18px;color:#222288;font-family:'Liberation Mono', monospace;transform:scaleY(1.1);transform-origin:0 12.90px;">??</div>
<div class="t" style="left:937px;top:1000.90px;font-size:14.65px;line-height:18px;color:#1e8c1e;font-family:'Liberation Mono', monospace;transform:scaleY(1.1);transform-origin:0 12.90px;">46h</div>
<div class="t" style="left:998px;top:1000.90px;font-size:14.65px;line-height:18px;color:#1e8c1e;font-family:'Liberation Mono', monospace;transform:scaleY(1.1);transform-origin:0 12.90px;">F</div>
<div class="t" style="left:620.5px;top:1020.90px;font-size:14.65px;line-height:18px;color:#222222;font-family:'Liberation Mono', monospace;transform:scaleY(1.1);transform-origin:0 12.90px;">000384ec</div>
<div class="t" style="left:699.3px;top:1020.90px;font-size:14.65px;line-height:18px;color:#1f1fe0;font-family:'Liberation Mono', monospace;transform:scaleY(1.1);transform-origin:0 12.90px;">00</div>
<div class="t" style="left:836.7px;top:1020.90px;font-size:14.65px;line-height:18px;color:#222288;font-family:'Liberation Mono', monospace;transform:scaleY(1.1);transform-origin:0 12.90px;">??</div>
<div class="t" style="left:937px;top:1020.90px;font-size:14.65px;line-height:18px;color:#1e8c1e;font-family:'Liberation Mono', monospace;transform:scaleY(1.1);transform-origin:0 12.90px;">00h</div>
<div class="t" style="left:620.5px;top:1040.90px;font-size:14.65px;line-height:18px;color:#222222;font-family:'Liberation Mono', monospace;transform:scaleY(1.1);transform-origin:0 12.90px;">000384ed</div>
<div class="t" style="left:699.3px;top:1040.90px;font-size:14.65px;line-height:18px;color:#1f1fe0;font-family:'Liberation Mono', monospace;transform:scaleY(1.1);transform-origin:0 12.90px;">00</div>
<div class="t" style="left:836.7px;top:1040.90px;font-size:14.65px;line-height:18px;color:#222288;font-family:'Liberation Mono', monospace;transform:scaleY(1.1);transform-origin:0 12.90px;">??</div>
<div class="t" style="left:937px;top:1040.90px;font-size:14.65px;line-height:18px;color:#1e8c1e;font-family:'Liberation Mono', monospace;transform:scaleY(1.1);transform-origin:0 12.90px;">00h</div>
<div class="t" style="left:620.5px;top:1060.90px;font-size:14.65px;line-height:18px;color:#222222;font-family:'Liberation Mono', monospace;transform:scaleY(1.1);transform-origin:0 12.90px;">000384ee</div>
<div class="t" style="left:699.3px;top:1060.90px;font-size:14.65px;line-height:18px;color:#1f1fe0;font-family:'Liberation Mono', monospace;transform:scaleY(1.1);transform-origin:0 12.90px;">00</div>
<div class="t" style="left:836.7px;top:1060.90px;font-size:14.65px;line-height:18px;color:#222288;font-family:'Liberation Mono', monospace;transform:scaleY(1.1);transform-origin:0 12.90px;">??</div>
<div class="t" style="left:937px;top:1060.90px;font-size:14.65px;line-height:18px;color:#1e8c1e;font-family:'Liberation Mono', monospace;transform:scaleY(1.1);transform-origin:0 12.90px;">00h</div>
<div class="t" style="left:620.5px;top:1080.90px;font-size:14.65px;line-height:18px;color:#222222;font-family:'Liberation Mono', monospace;transform:scaleY(1.1);transform-origin:0 12.90px;">000384ef</div>
<div class="t" style="left:699.3px;top:1080.90px;font-size:14.65px;line-height:18px;color:#1f1fe0;font-family:'Liberation Mono', monospace;transform:scaleY(1.1);transform-origin:0 12.90px;">00</div>
<div class="t" style="left:836.7px;top:1080.90px;font-size:14.65px;line-height:18px;color:#222288;font-family:'Liberation Mono', monospace;transform:scaleY(1.1);transform-origin:0 12.90px;">??</div>
<div class="t" style="left:937px;top:1080.90px;font-size:14.65px;line-height:18px;color:#1e8c1e;font-family:'Liberation Mono', monospace;transform:scaleY(1.1);transform-origin:0 12.90px;">00h</div>
<div style="left:1742px;top:106px;width:1240px;height:962px;border-top:1px solid #fdfdfd;border-left:1px solid #fdfdfd;border-bottom:1.5px solid #858585;"></div>
<div style="left:1744px;top:106.5px;width:1240px;height:30px;border-top:2px solid #8c8c8c;border-left:2px solid #8c8c8c;border-bottom:2px solid #858a90;background:linear-gradient(90deg,#2a6bbf 0%,#5a93d0 40%,#b9cfe6 70%,#e9edf1 88%,#f0f0f0 100%);box-shadow:inset 1px 1px 0 #dfe6ee;"></div>
<svg style="position:absolute;left:1746px;top:111px;" width="20" height="20" viewBox="0 0 20 20"><rect x="0" y="0" width="20" height="20" fill="#fff"/><text x="1" y="9" font-size="8.5" font-weight="bold" fill="#111" font-family="Liberation Sans" textLength="18">0101</text><text x="1" y="18.5" font-size="9" font-weight="bold" fill="#111" font-family="Liberation Sans" textLength="18">DAT</text></svg>
<div class="t" style="left:1774px;top:108.88px;font-size:22px;line-height:28px;color:#ffffff;font-family:'Liberation Sans', sans-serif;transform:scaleY(1.07);transform-origin:0 21.62px;letter-spacing:0.2px;">Defined Strings - 615 items</div>
<svg style="position:absolute;left:2885px;top:110px;" width="22" height="22" viewBox="0 0 22 22"><path d="M17 5 Q13 1.5 8 3.5 Q4.5 5 4 9 L1 9 L5.5 14 L10 9 L7 9 Q7.5 6.5 10 6 Q13 5.5 15 7.5 Z" fill="#b4b4b4"/><path d="M5 17 Q9 20.5 14 18.5 Q17.5 17 18 13 L21 13 L16.5 8 L12 13 L15 13 Q14.5 15.5 12 16 Q9 16.5 7 14.5 Z" fill="#b4b4b4"/></svg>
<svg style="position:absolute;left:2915px;top:114px;" width="16" height="15" viewBox="0 0 16 15"><rect x="0" y="0.0" width="16" height="1.5" fill="#333"/><rect x="0" y="2.7" width="16" height="1.5" fill="#333"/><rect x="0" y="5.4" width="16" height="1.5" fill="#333"/><rect x="0" y="8.100000000000001" width="16" height="1.5" fill="#333"/><rect x="0" y="10.8" width="16" height="1.5" fill="#333"/><rect x="0" y="13.5" width="16" height="1.5" fill="#333"/></svg>
<svg style="position:absolute;left:2944px;top:110px;" width="18" height="22" viewBox="0 0 18 22"><rect x="1" y="10" width="14" height="11" fill="#fff" stroke="#555" stroke-width="1.2"/><rect x="1" y="10" width="14" height="1.5" fill="#4a90e2"/><path d="M7 20 L7 11 Q7 6 12 6 L12 3 L17 7.5 L12 12 L12 9 Q10 9 10 11 L10 20 Z" fill="#22cc22" stroke="#111" stroke-width="0.8"/></svg>
<div style="left:2966px;top:112px;width:1px;height:22px;background:#cfcfcf;"></div>
<div style="left:1744px;top:136px;width:1240px;height:39px;background:#fff;border-bottom:1px solid #dcdcdc;border-left:1.5px solid #8eb1dc;"></div>
<div style="left:2052.5px;top:136px;width:1px;height:39px;background:#e2e2e2;"></div>
<div style="left:2361.5px;top:136px;width:1px;height:39px;background:#e2e2e2;"></div>
<div style="left:2670.0px;top:136px;width:1px;height:39px;background:#e2e2e2;"></div>
<div class="t" style="left:1857.5px;top:144.88px;font-size:22px;line-height:28px;color:#141414;font-family:'Liberation Sans', sans-serif;transform:scaleY(1.07);transform-origin:0 21.62px;">Location</div>
<svg style="position:absolute;left:2019px;top:147px;" width="17" height="16" viewBox="0 0 17 16"><path d="M1 1 L1 15 L16 15 Z" fill="#f4f4f4" stroke="#8a8a8a" stroke-width="1.2"/><path d="M3 9 H9 M3 12 H12" stroke="#9a9a9a" stroke-width="1.2"/></svg>
<div class="t" style="left:2147px;top:144.88px;font-size:22px;line-height:28px;color:#141414;font-family:'Liberation Sans', sans-serif;transform:scaleY(1.07);transform-origin:0 21.62px;">String Value</div>
<div class="t" style="left:2407px;top:144.88px;font-size:22px;line-height:28px;color:#141414;font-family:'Liberation Sans', sans-serif;transform:scaleY(1.07);transform-origin:0 21.62px;letter-spacing:0.33px;">String Representation</div>
<div class="t" style="left:2775px;top:144.88px;font-size:22px;line-height:28px;color:#141414;font-family:'Liberation Sans', sans-serif;transform:scaleY(1.07);transform-origin:0 21.62px;">Data Type</div>
<div style="left:1744px;top:175.0px;width:1240px;height:31.5px;background:#ffffff;"></div>
<div class="t" style="left:1751px;top:178.38px;font-size:22px;line-height:28px;color:#141414;font-family:'Liberation Sans', sans-serif;transform:scaleY(1.07);transform-origin:0 21.62px;letter-spacing:0.7px;">00038264</div>
<div class="t" style="left:2061px;top:178.38px;font-size:22px;line-height:28px;color:#141414;font-family:'Liberation Sans', sans-serif;transform:scaleY(1.07);transform-origin:0 21.62px;letter-spacing:0.30px;width:300px;overflow:hidden;">while</div>
<div class="t" style="left:2369px;top:178.38px;font-size:22px;line-height:28px;color:#141414;font-family:'Liberation Sans', sans-serif;transform:scaleY(1.07);transform-origin:0 21.62px;letter-spacing:0.30px;width:300px;overflow:hidden;">&quot;while&quot;</div>
<div class="t" style="left:2677.5px;top:178.38px;font-size:22px;line-height:28px;color:#141414;font-family:'Liberation Sans', sans-serif;transform:scaleY(1.07);transform-origin:0 21.62px;">ds</div>
<div style="left:1744px;top:206.2px;width:1240px;height:31.5px;background:#eef5fd;"></div>
<div class="t" style="left:1751px;top:209.58px;font-size:22px;line-height:28px;color:#141414;font-family:'Liberation Sans', sans-serif;transform:scaleY(1.07);transform-origin:0 21.62px;letter-spacing:0.7px;">00038274</div>
<div class="t" style="left:2061px;top:209.58px;font-size:22px;line-height:28px;color:#141414;font-family:'Liberation Sans', sans-serif;transform:scaleY(1.07);transform-origin:0 21.62px;letter-spacing:0.30px;width:300px;overflow:hidden;">false</div>
<div class="t" style="left:2369px;top:209.58px;font-size:22px;line-height:28px;color:#141414;font-family:'Liberation Sans', sans-serif;transform:scaleY(1.07);transform-origin:0 21.62px;letter-spacing:0.30px;width:300px;overflow:hidden;">&quot;false&quot;</div>
<div class="t" style="left:2677.5px;top:209.58px;font-size:22px;line-height:28px;color:#141414;font-family:'Liberation Sans', sans-serif;transform:scaleY(1.07);transform-origin:0 21.62px;">ds</div>
<div style="left:1744px;top:237.4px;width:1240px;height:31.5px;background:#ffffff;"></div>
<div class="t" style="left:1751px;top:240.78px;font-size:22px;line-height:28px;color:#141414;font-family:'Liberation Sans', sans-serif;transform:scaleY(1.07);transform-origin:0 21.62px;letter-spacing:0.7px;">00038284</div>
<div class="t" style="left:2061px;top:240.78px;font-size:22px;line-height:28px;color:#141414;font-family:'Liberation Sans', sans-serif;transform:scaleY(1.07);transform-origin:0 21.62px;letter-spacing:0.30px;width:300px;overflow:hidden;">repeat</div>
<div class="t" style="left:2369px;top:240.78px;font-size:22px;line-height:28px;color:#141414;font-family:'Liberation Sans', sans-serif;transform:scaleY(1.07);transform-origin:0 21.62px;letter-spacing:0.30px;width:300px;overflow:hidden;">&quot;repeat&quot;</div>
<div class="t" style="left:2677.5px;top:240.78px;font-size:22px;line-height:28px;color:#141414;font-family:'Liberation Sans', sans-serif;transform:scaleY(1.07);transform-origin:0 21.62px;">ds</div>
<div style="left:1744px;top:268.6px;width:1240px;height:31.5px;background:#eef5fd;"></div>
<div class="t" style="left:1751px;top:271.98px;font-size:22px;line-height:28px;color:#141414;font-family:'Liberation Sans', sans-serif;transform:scaleY(1.07);transform-origin:0 21.62px;letter-spacing:0.7px;">0003828c</div>
<div class="t" style="left:2061px;top:271.98px;font-size:22px;line-height:28px;color:#141414;font-family:'Liberation Sans', sans-serif;transform:scaleY(1.07);transform-origin:0 21.62px;letter-spacing:0.30px;width:300px;overflow:hidden;">until</div>
<div class="t" style="left:2369px;top:271.98px;font-size:22px;line-height:28px;color:#141414;font-family:'Liberation Sans', sans-serif;transform:scaleY(1.07);transform-origin:0 21.62px;letter-spacing:0.30px;width:300px;overflow:hidden;">&quot;until&quot;</div>
<div class="t" style="left:2677.5px;top:271.98px;font-size:22px;line-height:28px;color:#141414;font-family:'Liberation Sans', sans-serif;transform:scaleY(1.07);transform-origin:0 21.62px;">ds</div>
<div style="left:1744px;top:299.8px;width:1240px;height:31.5px;background:#ffffff;"></div>
<div class="t" style="left:1751px;top:303.18px;font-size:22px;line-height:28px;color:#141414;font-family:'Liberation Sans', sans-serif;transform:scaleY(1.07);transform-origin:0 21.62px;letter-spacing:0.7px;">00038294</div>
<div class="t" style="left:2061px;top:303.18px;font-size:22px;line-height:28px;color:#141414;font-family:'Liberation Sans', sans-serif;transform:scaleY(1.07);transform-origin:0 21.62px;letter-spacing:0.30px;width:300px;overflow:hidden;">return</div>
<div class="t" style="left:2369px;top:303.18px;font-size:22px;line-height:28px;color:#141414;font-family:'Liberation Sans', sans-serif;transform:scaleY(1.07);transform-origin:0 21.62px;letter-spacing:0.30px;width:300px;overflow:hidden;">&quot;return&quot;</div>
<div class="t" style="left:2677.5px;top:303.18px;font-size:22px;line-height:28px;color:#141414;font-family:'Liberation Sans', sans-serif;transform:scaleY(1.07);transform-origin:0 21.62px;">ds</div>
<div style="left:1744px;top:331.0px;width:1240px;height:31.5px;background:#eef5fd;"></div>
<div class="t" style="left:1751px;top:334.38px;font-size:22px;line-height:28px;color:#141414;font-family:'Liberation Sans', sans-serif;transform:scaleY(1.07);transform-origin:0 21.62px;letter-spacing:0.7px;">000382b0</div>
<div class="t" style="left:2061px;top:334.38px;font-size:22px;line-height:28px;color:#141414;font-family:'Liberation Sans', sans-serif;transform:scaleY(1.07);transform-origin:0 21.62px;letter-spacing:0.30px;width:300px;overflow:hidden;">&lt;number&gt;</div>
<div class="t" style="left:2369px;top:334.38px;font-size:22px;line-height:28px;color:#141414;font-family:'Liberation Sans', sans-serif;transform:scaleY(1.07);transform-origin:0 21.62px;letter-spacing:0.30px;width:300px;overflow:hidden;">&quot;&lt;number&gt;&quot;</div>
<div class="t" style="left:2677.5px;top:334.38px;font-size:22px;line-height:28px;color:#141414;font-family:'Liberation Sans', sans-serif;transform:scaleY(1.07);transform-origin:0 21.62px;">ds</div>
<div style="left:1744px;top:362.2px;width:1240px;height:31.5px;background:#ffffff;"></div>
<div class="t" style="left:1751px;top:365.58px;font-size:22px;line-height:28px;color:#141414;font-family:'Liberation Sans', sans-serif;transform:scaleY(1.07);transform-origin:0 21.62px;letter-spacing:0.7px;">000382c0</div>
<div class="t" style="left:2061px;top:365.58px;font-size:22px;line-height:28px;color:#141414;font-family:'Liberation Sans', sans-serif;transform:scaleY(1.07);transform-origin:0 21.62px;letter-spacing:0.30px;width:300px;overflow:hidden;">&lt;string&gt;</div>
<div class="t" style="left:2369px;top:365.58px;font-size:22px;line-height:28px;color:#141414;font-family:'Liberation Sans', sans-serif;transform:scaleY(1.07);transform-origin:0 21.62px;letter-spacing:0.30px;width:300px;overflow:hidden;">&quot;&lt;string&gt;&quot;</div>
<div class="t" style="left:2677.5px;top:365.58px;font-size:22px;line-height:28px;color:#141414;font-family:'Liberation Sans', sans-serif;transform:scaleY(1.07);transform-origin:0 21.62px;">ds</div>
<div style="left:1744px;top:393.4px;width:1240px;height:31.5px;background:#eef5fd;"></div>
<div class="t" style="left:1751px;top:396.78px;font-size:22px;line-height:28px;color:#141414;font-family:'Liberation Sans', sans-serif;transform:scaleY(1.07);transform-origin:0 21.62px;letter-spacing:0.7px;">000382cc</div>
<div class="t" style="left:2061px;top:396.78px;font-size:22px;line-height:28px;color:#141414;font-family:'Liberation Sans', sans-serif;transform:scaleY(1.07);transform-origin:0 21.62px;letter-spacing:0.30px;width:300px;overflow:hidden;">&lt;eof&gt;</div>
<div class="t" style="left:2369px;top:396.78px;font-size:22px;line-height:28px;color:#141414;font-family:'Liberation Sans', sans-serif;transform:scaleY(1.07);transform-origin:0 21.62px;letter-spacing:0.30px;width:300px;overflow:hidden;">&quot;&lt;eof&gt;&quot;</div>
<div class="t" style="left:2677.5px;top:396.78px;font-size:22px;line-height:28px;color:#141414;font-family:'Liberation Sans', sans-serif;transform:scaleY(1.07);transform-origin:0 21.62px;">ds</div>
<div style="left:1744px;top:424.6px;width:1240px;height:31.5px;background:#ffffff;"></div>
<div class="t" style="left:1751px;top:427.98px;font-size:22px;line-height:28px;color:#141414;font-family:'Liberation Sans', sans-serif;transform:scaleY(1.07);transform-origin:0 21.62px;letter-spacing:0.7px;">000382d4</div>
<div class="t" style="left:2061px;top:427.98px;font-size:22px;line-height:28px;color:#141414;font-family:'Liberation Sans', sans-serif;transform:scaleY(1.07);transform-origin:0 21.62px;letter-spacing:0.30px;width:300px;overflow:hidden;">&lt;name&gt;</div>
<div class="t" style="left:2369px;top:427.98px;font-size:22px;line-height:28px;color:#141414;font-family:'Liberation Sans', sans-serif;transform:scaleY(1.07);transform-origin:0 21.62px;letter-spacing:0.30px;width:300px;overflow:hidden;">&quot;&lt;name&gt;&quot;</div>
<div class="t" style="left:2677.5px;top:427.98px;font-size:22px;line-height:28px;color:#141414;font-family:'Liberation Sans', sans-serif;transform:scaleY(1.07);transform-origin:0 21.62px;">ds</div>
<div style="left:1744px;top:455.8px;width:1240px;height:31.5px;background:#eef5fd;"></div>
<div class="t" style="left:1751px;top:459.18px;font-size:22px;line-height:28px;color:#141414;font-family:'Liberation Sans', sans-serif;transform:scaleY(1.07);transform-origin:0 21.62px;letter-spacing:0.7px;">000382dc</div>
<div class="t" style="left:2061px;top:459.18px;font-size:22px;line-height:28px;color:#141414;font-family:'Liberation Sans', sans-serif;transform:scaleY(1.07);transform-origin:0 21.62px;letter-spacing:0.30px;width:300px;overflow:hidden;">&lt;integer&gt;</div>
<div class="t" style="left:2369px;top:459.18px;font-size:22px;line-height:28px;color:#141414;font-family:'Liberation Sans', sans-serif;transform:scaleY(1.07);transform-origin:0 21.62px;letter-spacing:0.30px;width:300px;overflow:hidden;">&quot;&lt;integer&gt;&quot;</div>
<div class="t" style="left:2677.5px;top:459.18px;font-size:22px;line-height:28px;color:#141414;font-family:'Liberation Sans', sans-serif;transform:scaleY(1.07);transform-origin:0 21.62px;">ds</div>
<div style="left:1744px;top:487.0px;width:1240px;height:31.5px;background:#ffffff;"></div>
<div class="t" style="left:1751px;top:490.38px;font-size:22px;line-height:28px;color:#141414;font-family:'Liberation Sans', sans-serif;transform:scaleY(1.07);transform-origin:0 21.62px;letter-spacing:0.7px;">000382e8</div>
<div class="t" style="left:2061px;top:490.38px;font-size:22px;line-height:28px;color:#141414;font-family:'Liberation Sans', sans-serif;transform:scaleY(1.07);transform-origin:0 21.62px;letter-spacing:0.30px;width:300px;overflow:hidden;">memory allocation error: bl...</div>
<div class="t" style="left:2369px;top:490.38px;font-size:22px;line-height:28px;color:#141414;font-family:'Liberation Sans', sans-serif;transform:scaleY(1.07);transform-origin:0 21.62px;letter-spacing:0.30px;width:300px;overflow:hidden;">&quot;memory allocation error: b...</div>
<div class="t" style="left:2677.5px;top:490.38px;font-size:22px;line-height:28px;color:#141414;font-family:'Liberation Sans', sans-serif;transform:scaleY(1.07);transform-origin:0 21.62px;">ds</div>
<div style="left:1744px;top:518.2px;width:1240px;height:31.5px;background:#eef5fd;"></div>
<div class="t" style="left:1751px;top:521.58px;font-size:22px;line-height:28px;color:#141414;font-family:'Liberation Sans', sans-serif;transform:scaleY(1.07);transform-origin:0 21.62px;letter-spacing:0.7px;">00038450</div>
<div class="t" style="left:2061px;top:521.58px;font-size:22px;line-height:28px;color:#141414;font-family:'Liberation Sans', sans-serif;transform:scaleY(1.07);transform-origin:0 21.62px;letter-spacing:0.30px;width:300px;overflow:hidden;">(null)</div>
<div class="t" style="left:2369px;top:521.58px;font-size:22px;line-height:28px;color:#141414;font-family:'Liberation Sans', sans-serif;transform:scaleY(1.07);transform-origin:0 21.62px;letter-spacing:0.30px;width:300px;overflow:hidden;">&quot;(null)&quot;</div>
<div class="t" style="left:2677.5px;top:521.58px;font-size:22px;line-height:28px;color:#141414;font-family:'Liberation Sans', sans-serif;transform:scaleY(1.07);transform-origin:0 21.62px;">ds</div>
<div style="left:1744px;top:549.4px;width:1240px;height:31.5px;background:#ffffff;"></div>
<div class="t" style="left:1751px;top:552.78px;font-size:22px;line-height:28px;color:#141414;font-family:'Liberation Sans', sans-serif;transform:scaleY(1.07);transform-origin:0 21.62px;letter-spacing:0.7px;">00038460</div>
<div class="t" style="left:2061px;top:552.78px;font-size:22px;line-height:28px;color:#141414;font-family:'Liberation Sans', sans-serif;transform:scaleY(1.07);transform-origin:0 21.62px;letter-spacing:0.30px;width:300px;overflow:hidden;">[string &quot;</div>
<div class="t" style="left:2369px;top:552.78px;font-size:22px;line-height:28px;color:#141414;font-family:'Liberation Sans', sans-serif;transform:scaleY(1.07);transform-origin:0 21.62px;letter-spacing:0.30px;width:300px;overflow:hidden;">&quot;[string \&quot;&quot;</div>
<div class="t" style="left:2677.5px;top:552.78px;font-size:22px;line-height:28px;color:#141414;font-family:'Liberation Sans', sans-serif;transform:scaleY(1.07);transform-origin:0 21.62px;">ds</div>
<div style="left:1744px;top:580.5999999999999px;width:1240px;height:31.5px;background:#2a73c0;"></div>
<div class="t" style="left:1751px;top:583.98px;font-size:22px;line-height:28px;color:#ffffff;font-family:'Liberation Sans', sans-serif;transform:scaleY(1.07);transform-origin:0 21.62px;letter-spacing:0.7px;">000384a0</div>
<div class="t" style="left:2061px;top:583.98px;font-size:22px;line-height:28px;color:#ffffff;font-family:'Liberation Sans', sans-serif;transform:scaleY(1.07);transform-origin:0 21.62px;letter-spacing:-0.65px;width:300px;overflow:hidden;">GETTABLE</div>
<div class="t" style="left:2369px;top:583.98px;font-size:22px;line-height:28px;color:#ffffff;font-family:'Liberation Sans', sans-serif;transform:scaleY(1.07);transform-origin:0 21.62px;letter-spacing:-0.65px;width:300px;overflow:hidden;">&quot;GETTABLE&quot;</div>
<div class="t" style="left:2677.5px;top:583.98px;font-size:22px;line-height:28px;color:#ffffff;font-family:'Liberation Sans', sans-serif;transform:scaleY(1.07);transform-origin:0 21.62px;">ds</div>
<div style="left:2053px;top:580.5999999999999px;width:309px;height:31.2px;border:1.5px solid #e8e820;"></div>
<div style="left:1744px;top:611.8px;width:1240px;height:31.5px;background:#ffffff;"></div>
<div class="t" style="left:1751px;top:615.18px;font-size:22px;line-height:28px;color:#141414;font-family:'Liberation Sans', sans-serif;transform:scaleY(1.07);transform-origin:0 21.62px;letter-spacing:0.7px;">000384ac</div>
<div class="t" style="left:2061px;top:615.18px;font-size:22px;line-height:28px;color:#141414;font-family:'Liberation Sans', sans-serif;transform:scaleY(1.07);transform-origin:0 21.62px;letter-spacing:-0.65px;width:300px;overflow:hidden;">GETGLOBAL</div>
<div class="t" style="left:2369px;top:615.18px;font-size:22px;line-height:28px;color:#141414;font-family:'Liberation Sans', sans-serif;transform:scaleY(1.07);transform-origin:0 21.62px;letter-spacing:-0.65px;width:300px;overflow:hidden;">&quot;GETGLOBAL&quot;</div>
<div class="t" style="left:2677.5px;top:615.18px;font-size:22px;line-height:28px;color:#141414;font-family:'Liberation Sans', sans-serif;transform:scaleY(1.07);transform-origin:0 21.62px;">ds</div>
<div style="left:1744px;top:643.0px;width:1240px;height:31.5px;background:#eef5fd;"></div>
<div class="t" style="left:1751px;top:646.38px;font-size:22px;line-height:28px;color:#141414;font-family:'Liberation Sans', sans-serif;transform:scaleY(1.07);transform-origin:0 21.62px;letter-spacing:0.7px;">000384b8</div>
<div class="t" style="left:2061px;top:646.38px;font-size:22px;line-height:28px;color:#141414;font-family:'Liberation Sans', sans-serif;transform:scaleY(1.07);transform-origin:0 21.62px;letter-spacing:-0.65px;width:300px;overflow:hidden;">SETGLOBAL</div>
<div class="t" style="left:2369px;top:646.38px;font-size:22px;line-height:28px;color:#141414;font-family:'Liberation Sans', sans-serif;transform:scaleY(1.07);transform-origin:0 21.62px;letter-spacing:-0.65px;width:300px;overflow:hidden;">&quot;SETGLOBAL&quot;</div>
<div class="t" style="left:2677.5px;top:646.38px;font-size:22px;line-height:28px;color:#141414;font-family:'Liberation Sans', sans-serif;transform:scaleY(1.07);transform-origin:0 21.62px;">ds</div>
<div style="left:1744px;top:674.2px;width:1240px;height:31.5px;background:#ffffff;"></div>
<div class="t" style="left:1751px;top:677.58px;font-size:22px;line-height:28px;color:#141414;font-family:'Liberation Sans', sans-serif;transform:scaleY(1.07);transform-origin:0 21.62px;letter-spacing:0.7px;">000384c4</div>
<div class="t" style="left:2061px;top:677.58px;font-size:22px;line-height:28px;color:#141414;font-family:'Liberation Sans', sans-serif;transform:scaleY(1.07);transform-origin:0 21.62px;letter-spacing:-0.65px;width:300px;overflow:hidden;">SETUPVAL</div>
<div class="t" style="left:2369px;top:677.58px;font-size:22px;line-height:28px;color:#141414;font-family:'Liberation Sans', sans-serif;transform:scaleY(1.07);transform-origin:0 21.62px;letter-spacing:-0.65px;width:300px;overflow:hidden;">&quot;SETUPVAL&quot;</div>
<div class="t" style="left:2677.5px;top:677.58px;font-size:22px;line-height:28px;color:#141414;font-family:'Liberation Sans', sans-serif;transform:scaleY(1.07);transform-origin:0 21.62px;">ds</div>
<div style="left:1744px;top:705.4px;width:1240px;height:31.5px;background:#eef5fd;"></div>
<div class="t" style="left:1751px;top:708.78px;font-size:22px;line-height:28px;color:#141414;font-family:'Liberation Sans', sans-serif;transform:scaleY(1.07);transform-origin:0 21.62px;letter-spacing:0.7px;">000384d0</div>
<div class="t" style="left:2061px;top:708.78px;font-size:22px;line-height:28px;color:#141414;font-family:'Liberation Sans', sans-serif;transform:scaleY(1.07);transform-origin:0 21.62px;letter-spacing:-0.65px;width:300px;overflow:hidden;">SETTABLE</div>
<div class="t" style="left:2369px;top:708.78px;font-size:22px;line-height:28px;color:#141414;font-family:'Liberation Sans', sans-serif;transform:scaleY(1.07);transform-origin:0 21.62px;letter-spacing:-0.65px;width:300px;overflow:hidden;">&quot;SETTABLE&quot;</div>
<div class="t" style="left:2677.5px;top:708.78px;font-size:22px;line-height:28px;color:#141414;font-family:'Liberation Sans', sans-serif;transform:scaleY(1.07);transform-origin:0 21.62px;">ds</div>
<div style="left:1744px;top:736.6px;width:1240px;height:31.5px;background:#ffffff;"></div>
<div class="t" style="left:1751px;top:739.98px;font-size:22px;line-height:28px;color:#141414;font-family:'Liberation Sans', sans-serif;transform:scaleY(1.07);transform-origin:0 21.62px;letter-spacing:0.7px;">000384dc</div>
<div class="t" style="left:2061px;top:739.98px;font-size:22px;line-height:28px;color:#141414;font-family:'Liberation Sans', sans-serif;transform:scaleY(1.07);transform-origin:0 21.62px;letter-spacing:-0.65px;width:300px;overflow:hidden;">NEWTABLE</div>
<div class="t" style="left:2369px;top:739.98px;font-size:22px;line-height:28px;color:#141414;font-family:'Liberation Sans', sans-serif;transform:scaleY(1.07);transform-origin:0 21.62px;letter-spacing:-0.65px;width:300px;overflow:hidden;">&quot;NEWTABLE&quot;</div>
<div class="t" style="left:2677.5px;top:739.98px;font-size:22px;line-height:28px;color:#141414;font-family:'Liberation Sans', sans-serif;transform:scaleY(1.07);transform-origin:0 21.62px;">ds</div>
<div style="left:1744px;top:767.8px;width:1240px;height:31.5px;background:#eef5fd;"></div>
<div class="t" style="left:1751px;top:771.18px;font-size:22px;line-height:28px;color:#141414;font-family:'Liberation Sans', sans-serif;transform:scaleY(1.07);transform-origin:0 21.62px;letter-spacing:0.7px;">000384f0</div>
<div class="t" style="left:2061px;top:771.18px;font-size:22px;line-height:28px;color:#141414;font-family:'Liberation Sans', sans-serif;transform:scaleY(1.07);transform-origin:0 21.62px;letter-spacing:-0.65px;width:300px;overflow:hidden;">LOADNIL</div>
<div class="t" style="left:2369px;top:771.18px;font-size:22px;line-height:28px;color:#141414;font-family:'Liberation Sans', sans-serif;transform:scaleY(1.07);transform-origin:0 21.62px;letter-spacing:-0.65px;width:300px;overflow:hidden;">&quot;LOADNIL&quot;</div>
<div class="t" style="left:2677.5px;top:771.18px;font-size:22px;line-height:28px;color:#141414;font-family:'Liberation Sans', sans-serif;transform:scaleY(1.07);transform-origin:0 21.62px;">ds</div>
<div style="left:1744px;top:799.0px;width:1240px;height:31.5px;background:#ffffff;"></div>
<div class="t" style="left:1751px;top:802.38px;font-size:22px;line-height:28px;color:#141414;font-family:'Liberation Sans', sans-serif;transform:scaleY(1.07);transform-origin:0 21.62px;letter-spacing:0.7px;">000384f8</div>
<div class="t" style="left:2061px;top:802.38px;font-size:22px;line-height:28px;color:#141414;font-family:'Liberation Sans', sans-serif;transform:scaleY(1.07);transform-origin:0 21.62px;letter-spacing:-0.65px;width:300px;overflow:hidden;">LOADK</div>
<div class="t" style="left:2369px;top:802.38px;font-size:22px;line-height:28px;color:#141414;font-family:'Liberation Sans', sans-serif;transform:scaleY(1.07);transform-origin:0 21.62px;letter-spacing:-0.65px;width:300px;overflow:hidden;">&quot;LOADK&quot;</div>
<div class="t" style="left:2677.5px;top:802.38px;font-size:22px;line-height:28px;color:#141414;font-family:'Liberation Sans', sans-serif;transform:scaleY(1.07);transform-origin:0 21.62px;">ds</div>
<div style="left:1744px;top:830.1999999999999px;width:1240px;height:31.5px;background:#eef5fd;"></div>
<div class="t" style="left:1751px;top:833.58px;font-size:22px;line-height:28px;color:#141414;font-family:'Liberation Sans', sans-serif;transform:scaleY(1.07);transform-origin:0 21.62px;letter-spacing:0.7px;">00038500</div>
<div class="t" style="left:2061px;top:833.58px;font-size:22px;line-height:28px;color:#141414;font-family:'Liberation Sans', sans-serif;transform:scaleY(1.07);transform-origin:0 21.62px;letter-spacing:-0.65px;width:300px;overflow:hidden;">LOADBOOL</div>
<div class="t" style="left:2369px;top:833.58px;font-size:22px;line-height:28px;color:#141414;font-family:'Liberation Sans', sans-serif;transform:scaleY(1.07);transform-origin:0 21.62px;letter-spacing:-0.65px;width:300px;overflow:hidden;">&quot;LOADBOOL&quot;</div>
<div class="t" style="left:2677.5px;top:833.58px;font-size:22px;line-height:28px;color:#141414;font-family:'Liberation Sans', sans-serif;transform:scaleY(1.07);transform-origin:0 21.62px;">ds</div>
<div style="left:1744px;top:861.4px;width:1240px;height:31.5px;background:#ffffff;"></div>
<div class="t" style="left:1751px;top:864.78px;font-size:22px;line-height:28px;color:#141414;font-family:'Liberation Sans', sans-serif;transform:scaleY(1.07);transform-origin:0 21.62px;letter-spacing:0.7px;">0003850c</div>
<div class="t" style="left:2061px;top:864.78px;font-size:22px;line-height:28px;color:#141414;font-family:'Liberation Sans', sans-serif;transform:scaleY(1.07);transform-origin:0 21.62px;letter-spacing:-0.65px;width:300px;overflow:hidden;">GETUPVAL</div>
<div class="t" style="left:2369px;top:864.78px;font-size:22px;line-height:28px;color:#141414;font-family:'Liberation Sans', sans-serif;transform:scaleY(1.07);transform-origin:0 21.62px;letter-spacing:-0.65px;width:300px;overflow:hidden;">&quot;GETUPVAL&quot;</div>
<div class="t" style="left:2677.5px;top:864.78px;font-size:22px;line-height:28px;color:#141414;font-family:'Liberation Sans', sans-serif;transform:scaleY(1.07);transform-origin:0 21.62px;">ds</div>
<div style="left:1744px;top:892.6px;width:1240px;height:31.5px;background:#eef5fd;"></div>
<div class="t" style="left:1751px;top:895.98px;font-size:22px;line-height:28px;color:#141414;font-family:'Liberation Sans', sans-serif;transform:scaleY(1.07);transform-origin:0 21.62px;letter-spacing:0.7px;">00038548</div>
<div class="t" style="left:2061px;top:895.98px;font-size:22px;line-height:28px;color:#141414;font-family:'Liberation Sans', sans-serif;transform:scaleY(1.07);transform-origin:0 21.62px;letter-spacing:-0.65px;width:300px;overflow:hidden;">CONCAT</div>
<div class="t" style="left:2369px;top:895.98px;font-size:22px;line-height:28px;color:#141414;font-family:'Liberation Sans', sans-serif;transform:scaleY(1.07);transform-origin:0 21.62px;letter-spacing:-0.65px;width:300px;overflow:hidden;">&quot;CONCAT&quot;</div>
<div class="t" style="left:2677.5px;top:895.98px;font-size:22px;line-height:28px;color:#141414;font-family:'Liberation Sans', sans-serif;transform:scaleY(1.07);transform-origin:0 21.62px;">ds</div>
<div style="left:1744px;top:923.8px;width:1240px;height:31.5px;background:#ffffff;"></div>
<div class="t" style="left:1751px;top:927.18px;font-size:22px;line-height:28px;color:#141414;font-family:'Liberation Sans', sans-serif;transform:scaleY(1.07);transform-origin:0 21.62px;letter-spacing:0.7px;">0003855c</div>
<div class="t" style="left:2061px;top:927.18px;font-size:22px;line-height:28px;color:#141414;font-family:'Liberation Sans', sans-serif;transform:scaleY(1.07);transform-origin:0 21.62px;letter-spacing:-0.65px;width:300px;overflow:hidden;">TESTSET</div>
<div class="t" style="left:2369px;top:927.18px;font-size:22px;line-height:28px;color:#141414;font-family:'Liberation Sans', sans-serif;transform:scaleY(1.07);transform-origin:0 21.62px;letter-spacing:-0.65px;width:300px;overflow:hidden;">&quot;TESTSET&quot;</div>
<div class="t" style="left:2677.5px;top:927.18px;font-size:22px;line-height:28px;color:#141414;font-family:'Liberation Sans', sans-serif;transform:scaleY(1.07);transform-origin:0 21.62px;">ds</div>
<div style="left:1744px;top:955.0px;width:1240px;height:31.5px;background:#eef5fd;"></div>
<div class="t" style="left:1751px;top:958.38px;font-size:22px;line-height:28px;color:#141414;font-family:'Liberation Sans', sans-serif;transform:scaleY(1.07);transform-origin:0 21.62px;letter-spacing:0.7px;">0003856c</div>
<div class="t" style="left:2061px;top:958.38px;font-size:22px;line-height:28px;color:#141414;font-family:'Liberation Sans', sans-serif;transform:scaleY(1.07);transform-origin:0 21.62px;letter-spacing:-0.65px;width:300px;overflow:hidden;">FORLOOP</div>
<div class="t" style="left:2369px;top:958.38px;font-size:22px;line-height:28px;color:#141414;font-family:'Liberation Sans', sans-serif;transform:scaleY(1.07);transform-origin:0 21.62px;letter-spacing:-0.65px;width:300px;overflow:hidden;">&quot;FORLOOP&quot;</div>
<div class="t" style="left:2677.5px;top:958.38px;font-size:22px;line-height:28px;color:#141414;font-family:'Liberation Sans', sans-serif;transform:scaleY(1.07);transform-origin:0 21.62px;">ds</div>
<div style="left:1744px;top:986.1999999999999px;width:1240px;height:31.5px;background:#ffffff;"></div>
<div class="t" style="left:1751px;top:989.58px;font-size:22px;line-height:28px;color:#141414;font-family:'Liberation Sans', sans-serif;transform:scaleY(1.07);transform-origin:0 21.62px;letter-spacing:0.7px;">00038574</div>
<div class="t" style="left:2061px;top:989.58px;font-size:22px;line-height:28px;color:#141414;font-family:'Liberation Sans', sans-serif;transform:scaleY(1.07);transform-origin:0 21.62px;letter-spacing:-0.65px;width:300px;overflow:hidden;">FORPREP</div>
<div class="t" style="left:2369px;top:989.58px;font-size:22px;line-height:28px;color:#141414;font-family:'Liberation Sans', sans-serif;transform:scaleY(1.07);transform-origin:0 21.62px;letter-spacing:-0.65px;width:300px;overflow:hidden;">&quot;FORPREP&quot;</div>
<div class="t" style="left:2677.5px;top:989.58px;font-size:22px;line-height:28px;color:#141414;font-family:'Liberation Sans', sans-serif;transform:scaleY(1.07);transform-origin:0 21.62px;">ds</div>
<div style="left:1744px;top:175px;width:1.5px;height:843px;background:#8eb1dc;"></div>
<div style="left:1744px;top:1017px;width:1240px;height:1.5px;background:#8eb1dc;"></div>
<div style="left:1744px;top:1019px;width:1240px;height:48px;border-top:2px solid #8f8f8f;border-left:2px solid #9a9a9a;border-bottom:1px solid #fff;background:#f2f2f2;"></div>
<div class="t" style="left:1751px;top:1030.68px;font-size:22px;line-height:28px;color:#111;font-family:'Liberation Sans', sans-serif;transform:scaleY(1.07);transform-origin:0 21.62px;">Filter:</div>
<div style="left:1825px;top:1024px;width:1087px;height:37px;background:#fff;border:1px solid #c4c4c4;"></div>
<svg style="position:absolute;left:2917px;top:1031px;" width="22" height="22" viewBox="0 0 22 22"><defs><linearGradient id="fic" x1="0" y1="0" x2="1" y2="1"><stop offset="0" stop-color="#e4efff"/><stop offset="1" stop-color="#b8d4f4"/></linearGradient></defs><path d="M4.5 1 L14 1 L18.5 5.5 L18.5 19.5 Q18.5 20.5 17.5 20.5 L5.5 20.5 Q4.5 20.5 4.5 19.5 Z" fill="url(#fic)" stroke="#5a8ede" stroke-width="1.3"/><rect x="6" y="14.5" width="11" height="2.6" fill="#4aa8f0"/><path d="M6.5 6.5 L2 11 L6.5 15.5 L9 11 Z" fill="#4a90e2"/><path d="M10.5 6.5 L15 11 L10.5 15.5 L8 11 Z" fill="#3a80d8"/><path d="M8.5 8 L10 11 L8.5 14 L7 11 Z" fill="#e8f0ff"/></svg>
<svg style="position:absolute;left:2951px;top:1033px;" width="22" height="20" viewBox="0 0 22 20"><path d="M1 4 H21 M1 10 H21 M1 16 H21" stroke="#444" stroke-width="1.8"/><circle cx="14" cy="4" r="2.6" fill="#444"/><circle cx="7" cy="10" r="2.6" fill="#444"/><circle cx="14" cy="16" r="2.6" fill="#444"/></svg>
<div style="left:1742px;top:1067px;width:1240px;height:57px;background:#f2f2f2;"></div>
<div style="left:2096px;top:1066px;width:242px;height:4.6px;background:#4a86c8;"></div>
<svg style="position:absolute;left:1762px;top:1082px;" width="22.0" height="21.0" viewBox="0 0 22.0 21.0"><g transform="scale(1.0)"><path d="M12.5 4 L10.5 2 L4.5 2 L2 4.5 L2 10.5 L4.5 13 L10.5 13 L12.5 11" fill="none" stroke="#3a8ef8" stroke-width="3.2" stroke-linejoin="miter"/><path d="M19 8.5 Q18 7 16.5 8 Q15.5 9 15.3 12 L14.5 18 Q14 20 12 19.5" fill="none" stroke="#e018d8" stroke-width="2.2"/><path d="M13 12.5 L18.5 12.5" stroke="#e018d8" stroke-width="1.6"/></g></svg>
<div class="t" style="left:1789px;top:1080.88px;font-size:22px;line-height:28px;color:#111;font-family:'Liberation Sans', sans-serif;transform:scaleY(1.07);transform-origin:0 21.62px;letter-spacing:0.33px;">Decompile: lua_newuser...</div>
<svg style="position:absolute;left:2066px;top:1087px;" width="10" height="10" viewBox="0 0 10 10"><path d="M1.5 1.5 L8.5 8.5 M8.5 1.5 L1.5 8.5" stroke="#111" stroke-width="2.0" stroke-linecap="round"/></svg>
<svg style="position:absolute;left:2115px;top:1084px;" width="20" height="20" viewBox="0 0 20 20"><rect x="0" y="0" width="20" height="20" fill="#f2f2f2"/><text x="1" y="9" font-size="8.5" font-weight="bold" fill="#111" font-family="Liberation Sans" textLength="18">0101</text><text x="1" y="18.5" font-size="9" font-weight="bold" fill="#111" font-family="Liberation Sans" textLength="18">DAT</text></svg>
<div class="t" style="left:2141.5px;top:1080.88px;font-size:22px;line-height:28px;color:#111;font-family:'Liberation Sans', sans-serif;transform:scaleY(1.07);transform-origin:0 21.62px;">Defined Strings</div>
<svg style="position:absolute;left:2307px;top:1087px;" width="10" height="10" viewBox="0 0 10 10"><path d="M1.5 1.5 L8.5 8.5 M8.5 1.5 L1.5 8.5" stroke="#111" stroke-width="2.0" stroke-linecap="round"/></svg>
<div style="left:433px;top:1122px;width:2550px;height:278px;border-top:1px solid #fdfdfd;border-left:1px solid #fdfdfd;border-bottom:2.5px solid #858585;"></div>
<div style="left:435px;top:1124.5px;width:2545px;height:30.5px;border:2px solid #9b9b9b;border-right:none;background:linear-gradient(90deg,#a9a9a9 0%,#b4b4b4 25%,#c8c8c8 50%,#dcdcdc 75%,#ececec 100%);box-shadow:inset 1px 1px 0 #fff;"></div>
<svg style="position:absolute;left:440px;top:1129px;" width="18" height="20" viewBox="0 0 18 20"><defs><linearGradient id="mon1" x1="0" y1="0" x2="1" y2="1"><stop offset="0" stop-color="#4a7cc8"/><stop offset="1" stop-color="#8ab4e8"/></linearGradient></defs><rect x="0.5" y="0.5" width="16" height="12" fill="#f4f4f4" stroke="#bbb" stroke-width="0.6"/><rect x="2" y="2" width="13" height="9" fill="url(#mon1)"/><rect x="7" y="13" width="3" height="2.5" fill="#c8c8c8"/><rect x="3.5" y="15.5" width="10" height="2" rx="1" fill="#fff" stroke="#999" stroke-width="0.5"/></svg>
<div class="t" style="left:466px;top:1127.88px;font-size:22px;line-height:28px;color:#141414;font-family:'Liberation Sans', sans-serif;transform:scaleY(1.07);transform-origin:0 21.62px;">Console - Scripting</div>
<svg style="position:absolute;left:2911px;top:1128px;" width="21" height="23" viewBox="0 0 21 23"><defs><linearGradient id="lk1" x1="0" y1="0" x2="1" y2="1"><stop offset="0" stop-color="#fbe8a0"/><stop offset="0.5" stop-color="#f0c040"/><stop offset="1" stop-color="#d88a20"/></linearGradient></defs><path d="M5 10 V7 A5.5 5.5 0 0 1 16 7 V10" fill="none" stroke="#9a9a9a" stroke-width="2.6"/><rect x="1.5" y="9.5" width="18" height="12.5" rx="1.5" fill="url(#lk1)" stroke="#d8a040" stroke-width="0.8"/><rect x="4" y="12" width="13" height="8" fill="#f4c838" opacity="0.8"/><rect x="9.6" y="13" width="1.8" height="4" rx="0.9" fill="#8a5a10"/></svg>
<svg style="position:absolute;left:2939px;top:1127px;" width="20" height="23" viewBox="0 0 20 23"><path d="M8 2 L18 2 L11 17 L3 14 Z" fill="#f2c820" stroke="#222" stroke-width="1" stroke-dasharray="1.2 0.8"/><path d="M6 9 L14 10 M5 12 L13 13" stroke="#fff3a0" stroke-width="1.2"/><ellipse cx="6" cy="18" rx="5" ry="4.2" fill="#eeb0b8" stroke="#8a5a5a" stroke-width="0.8"/><path d="M12 22 H18" stroke="#d0a0a0" stroke-width="0.8" stroke-dasharray="1 1"/></svg>
<div style="left:2964px;top:1128px;width:1px;height:22px;background:#cfcfcf;"></div>
<svg style="position:absolute;left:2968px;top:1132px;" width="8" height="14" viewBox="0 0 8 14"><path d="M1 1 L10 12 M10 1 L1 12" stroke="#111" stroke-width="2.4"/></svg>
<div style="left:435px;top:1155px;width:2545px;height:242.5px;background:#f2f2f2;border-left:1.5px solid #c8c8c8;"></div>
<div style="left:0px;top:1400px;width:2974px;height:20px;background:#f2f2f2;"></div>
<svg style="position:absolute;left:3px;top:1409px;" width="20" height="12" viewBox="0 0 20 12"><circle cx="10" cy="10" r="8.5" fill="#fff" stroke="#555" stroke-width="1.2"/><path d="M10 10 L18 4 A8.5 8.5 0 0 1 15 17 Z" fill="#dd2020"/><circle cx="13" cy="12" r="4" fill="#e02424"/></svg>
<div style="left:28px;top:1403.5px;width:2360px;height:30px;border-top:3px solid #8a8a8a;border-left:2.5px solid #8a8a8a;border-right:1px solid #fff;background:#f0f0f0;"></div>
<div style="left:2394px;top:1403.5px;width:127px;height:30px;border-top:3px solid #8a8a8a;border-left:2.5px solid #8a8a8a;border-right:1px solid #fff;background:#f0f0f0;"></div>
<div style="left:2527px;top:1403.5px;width:171px;height:30px;border-top:3px solid #8a8a8a;border-left:2.5px solid #8a8a8a;border-right:1px solid #fff;background:#f0f0f0;"></div>
<div style="left:2703px;top:1403.5px;width:258.5px;height:30px;border-top:3px solid #8a8a8a;border-left:2.5px solid #8a8a8a;border-right:1px solid #fff;background:#f0f0f0;"></div>
<div style="left:2965.5px;top:1403.5px;width:24.5px;height:30px;border-top:3px solid #8a8a8a;border-left:2.5px solid #8a8a8a;border-right:1px solid #fff;background:#f0f0f0;"></div>
<div class="t" style="left:2400px;top:1409.88px;font-size:22px;line-height:28px;color:#141414;font-family:'Liberation Sans', sans-serif;transform:scaleY(1.07);transform-origin:0 21.62px;">000384a0</div>
<div class="t" style="left:2709px;top:1409.88px;font-size:22px;line-height:28px;color:#141414;font-family:'Liberation Sans', sans-serif;transform:scaleY(1.07);transform-origin:0 21.62px;">string (9)</div>
</body></html>
